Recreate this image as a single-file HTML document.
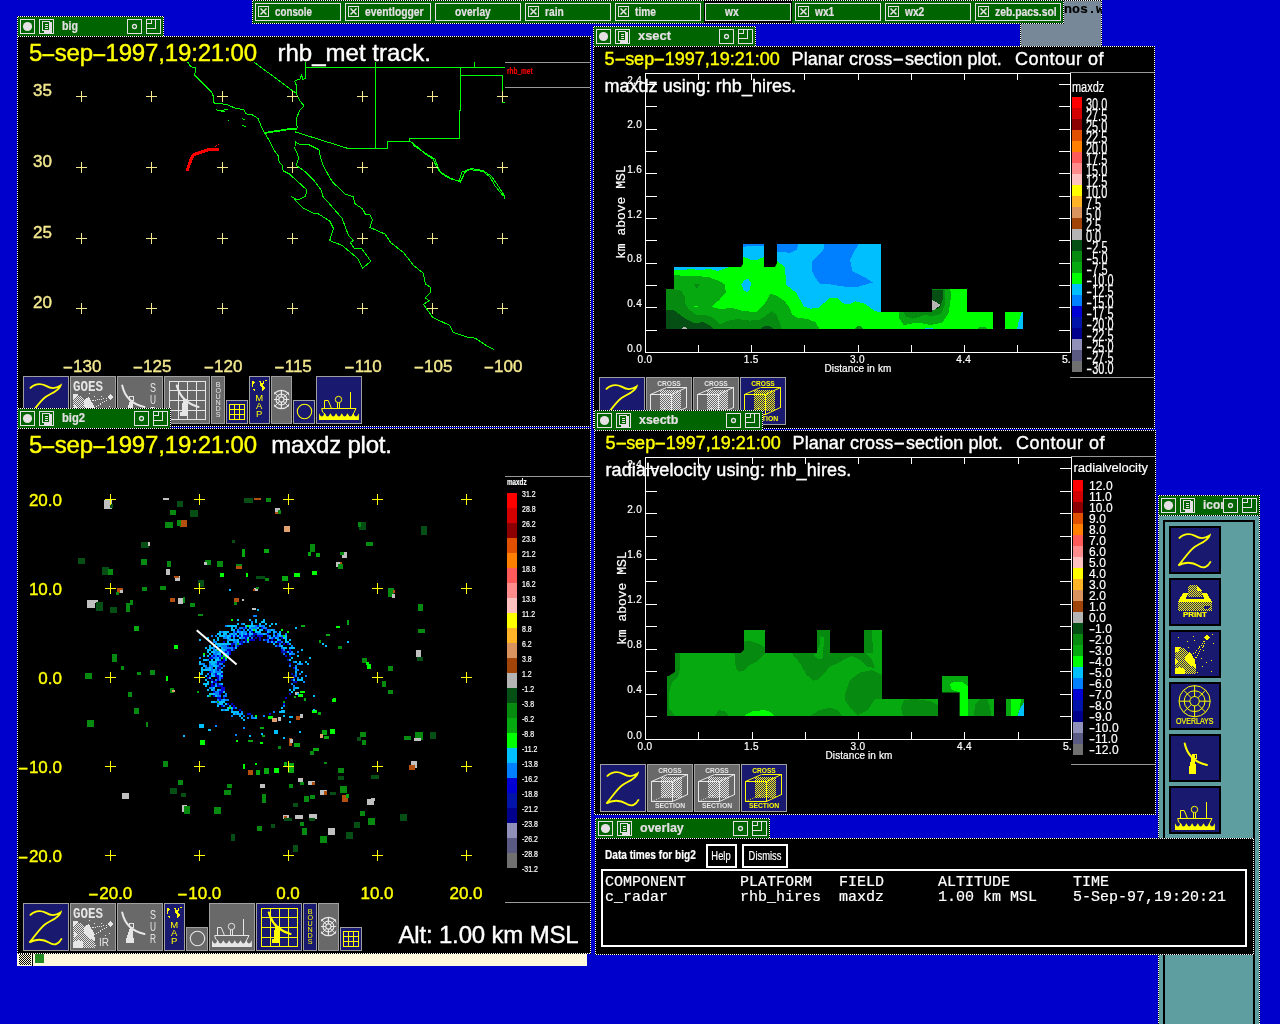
<!DOCTYPE html><html><head><meta charset="utf-8"><title>zebra display</title><style>
html,body{margin:0;padding:0;background:#0000CD;}
body{width:1280px;height:1024px;overflow:hidden;position:relative;font-family:"Liberation Sans",sans-serif;}
div{position:absolute;box-sizing:border-box;}
body>div{will-change:transform;}
svg{position:absolute;left:0;top:0;overflow:hidden;}
.dot{background:repeating-conic-gradient(#fff 0 25%,#000 0 50%) 0 0/2px 2px;}
.t{white-space:pre;line-height:1;-webkit-text-stroke:.2px;}
.b{font-weight:bold;}
.k{-webkit-text-stroke:.4px;}
.hy{display:inline-block;position:static;transform:scaleX(1.6);width:.58em;text-align:center;}
.m{font-family:"Liberation Mono",monospace;}
.s{font-family:"Liberation Serif",serif;}
.nw{display:inline-block;position:static;transform-origin:0 50%;}
</style></head><body>
<svg width="0" height="0" style="position:absolute"><defs><pattern id="ckg" width="2" height="2" patternUnits="userSpaceOnUse"><rect width="2" height="2" fill="#696969"/><rect width="1" height="1" fill="#E6E6E6"/><rect x="1" y="1" width="1" height="1" fill="#E6E6E6"/></pattern><pattern id="cky" width="2" height="2" patternUnits="userSpaceOnUse"><rect width="2" height="2" fill="#191970"/><rect width="1" height="1" fill="#FFFF00"/><rect x="1" y="1" width="1" height="1" fill="#FFFF00"/></pattern><pattern id="ckb" width="2" height="2" patternUnits="userSpaceOnUse"><rect width="2" height="2" fill="#FFF8DC"/><rect width="1" height="1" fill="#000"/><rect x="1" y="1" width="1" height="1" fill="#000"/></pattern></defs></svg>
<div class="dot" style="left:1020px;top:0px;width:82px;height:61px;overflow:hidden;">
<div style="left:1px;top:1px;width:80px;height:59px;background:#778899;"></div>
<div class="t m b" style="left:44px;top:3.31px;font-size:13.3px;color:#000;">nos.w</div>
</div>
<div class="dot" style="left:252px;top:0px;width:812px;height:24px;overflow:hidden;">
<div style="left:1px;top:1px;width:810px;height:22px;background:#006400;"></div>
<div class="t  b" style="left:23px;top:5.84px;font-size:12px;color:#E4E0E4;"><span class="nw" style="transform:scaleX(0.8154)">console</span></div>
<div class="t  b" style="left:113px;top:5.84px;font-size:12px;color:#E4E0E4;"><span class="nw" style="transform:scaleX(0.8618)">eventlogger</span></div>
<div class="t  b" style="left:203px;top:5.84px;font-size:12px;color:#E4E0E4;"><span class="nw" style="transform:scaleX(0.8500)">overlay</span></div>
<div class="t  b" style="left:293px;top:5.84px;font-size:12px;color:#E4E0E4;"><span class="nw" style="transform:scaleX(0.8500)">rain</span></div>
<div class="t  b" style="left:383px;top:5.84px;font-size:12px;color:#E4E0E4;"><span class="nw" style="transform:scaleX(0.8500)">time</span></div>
<div class="t  b" style="left:473.053px;top:5.84px;font-size:12px;color:#E4E0E4;"><span class="nw" style="transform:scaleX(0.8500)">wx</span></div>
<div class="t  b" style="left:563.053px;top:5.84px;font-size:12px;color:#E4E0E4;"><span class="nw" style="transform:scaleX(0.8500)">wx1</span></div>
<div class="t  b" style="left:653.053px;top:5.84px;font-size:12px;color:#E4E0E4;"><span class="nw" style="transform:scaleX(0.8500)">wx2</span></div>
<div class="t  b" style="left:743px;top:5.84px;font-size:12px;color:#E4E0E4;"><span class="nw" style="transform:scaleX(0.8651)">zeb.pacs.sol</span></div>
<svg width="812" height="24" viewBox="252 0 812 24" shape-rendering="crispEdges"><rect x="255.5" y="3.5" width="85" height="17" fill="none" stroke="#E4E0E4"/><rect x="258.5" y="6.5" width="10" height="10" fill="none" stroke="#E4E0E4"/><path d="M260.5 8.5 l6 6 M266.5 8.5 l-6 6" stroke="#E4E0E4" stroke-width="1.6" shape-rendering="auto"/><rect x="345.5" y="3.5" width="85" height="17" fill="none" stroke="#E4E0E4"/><rect x="348.5" y="6.5" width="10" height="10" fill="none" stroke="#E4E0E4"/><path d="M350.5 8.5 l6 6 M356.5 8.5 l-6 6" stroke="#E4E0E4" stroke-width="1.6" shape-rendering="auto"/><rect x="435.5" y="3.5" width="85" height="17" fill="none" stroke="#E4E0E4"/><rect x="525.5" y="3.5" width="85" height="17" fill="none" stroke="#E4E0E4"/><rect x="528.5" y="6.5" width="10" height="10" fill="none" stroke="#E4E0E4"/><path d="M530.5 8.5 l6 6 M536.5 8.5 l-6 6" stroke="#E4E0E4" stroke-width="1.6" shape-rendering="auto"/><rect x="615.5" y="3.5" width="85" height="17" fill="none" stroke="#E4E0E4"/><rect x="618.5" y="6.5" width="10" height="10" fill="none" stroke="#E4E0E4"/><path d="M620.5 8.5 l6 6 M626.5 8.5 l-6 6" stroke="#E4E0E4" stroke-width="1.6" shape-rendering="auto"/><rect x="704.5" y="1.5" width="87" height="21" fill="none" stroke="#000" stroke-width="1"/><rect x="705.5" y="2.5" width="85" height="19" fill="none" stroke="#000" stroke-width="1"/><rect x="705.5" y="3.5" width="85" height="17" fill="none" stroke="#E4E0E4"/><rect x="795.5" y="3.5" width="85" height="17" fill="none" stroke="#E4E0E4"/><rect x="798.5" y="6.5" width="10" height="10" fill="none" stroke="#E4E0E4"/><path d="M800.5 8.5 l6 6 M806.5 8.5 l-6 6" stroke="#E4E0E4" stroke-width="1.6" shape-rendering="auto"/><rect x="885.5" y="3.5" width="85" height="17" fill="none" stroke="#E4E0E4"/><rect x="888.5" y="6.5" width="10" height="10" fill="none" stroke="#E4E0E4"/><path d="M890.5 8.5 l6 6 M896.5 8.5 l-6 6" stroke="#E4E0E4" stroke-width="1.6" shape-rendering="auto"/><rect x="975.5" y="3.5" width="85" height="17" fill="none" stroke="#E4E0E4"/><rect x="978.5" y="6.5" width="10" height="10" fill="none" stroke="#E4E0E4"/><path d="M980.5 8.5 l6 6 M986.5 8.5 l-6 6" stroke="#E4E0E4" stroke-width="1.6" shape-rendering="auto"/></svg>
</div>
<div class="dot" style="left:17px;top:16px;width:147px;height:21px;overflow:hidden;">
<div style="left:1px;top:1px;width:145px;height:19px;background:#006400;"></div>
<div class="t  b" style="left:45px;top:3.84px;font-size:12px;color:#E4E0E4;"><span class="nw" style="transform:scaleX(0.8889)">big</span></div>
<svg width="147" height="21" viewBox="17 16 147 21" shape-rendering="crispEdges"><rect x="20.5" y="19.5" width="14" height="14" fill="#006400" stroke="#E4E0E4"/><circle cx="27.5" cy="26.5" r="4.6" fill="#E4E0E4" shape-rendering="auto"/><rect x="39.5" y="19.5" width="14" height="14" fill="#006400" stroke="#E4E0E4"/><path d="M42.5 21.5 h7 v9 h-7 z" fill="none" stroke="#E4E0E4"/><path d="M49.5 22.5 h2 v10 h-7 v-2" fill="none" stroke="#E4E0E4" stroke-width="1"/><rect x="44" y="31" width="6" height="2" fill="#E4E0E4"/><rect x="50" y="23" width="2" height="9" fill="#E4E0E4"/><rect x="45" y="24" width="3" height="1" fill="#E4E0E4"/><rect x="45" y="26" width="3" height="1" fill="#E4E0E4"/><rect x="45" y="28" width="3" height="1" fill="#E4E0E4"/><rect x="146.5" y="19.5" width="14" height="14" fill="#006400" stroke="#E4E0E4"/><path d="M151.5 19.5 v4 h-5 M155.5 19.5 v9 h-9" fill="none" stroke="#E4E0E4"/><rect x="127.5" y="19.5" width="14" height="14" fill="#006400" stroke="#E4E0E4"/><circle cx="134.5" cy="26.5" r="2" fill="none" stroke="#E4E0E4" stroke-width="1.3" shape-rendering="auto"/></svg>
</div>
<div class="dot" style="left:17px;top:36px;width:574px;height:391px;overflow:hidden;">
<div style="left:1px;top:1px;width:572px;height:389px;background:#000;"></div>
<svg width="574" height="391" viewBox="17 36 574 391" shape-rendering="crispEdges"><path d="M187.8 62.3 L190.9 66.9 L195.6 67.7 L194.8 75.5 L201.9 82.6 L211.3 91.9 L213.6 96.6 L213.6 102.9 L226.9 104.4 L233.1 107.6 L244.1 109.9 L245.6 113.8 L251.9 114.6 L258.1 118.5 L261.3 126.3 L264.4 132.6 L269.1 140.4 L273.8 149.8 L278.4 156 L279.2 162.3 L282.3 165.4 L283.1 170.8 L289.4 174 L298.8 182.6 L306.6 189.6 L305.8 195.8 L300.3 199 L295.6 199 L290.9 196.3" fill="none" stroke="#00FF00" stroke-width="1"/><path d="M294 199 L298 203 L302.5 207.8 L313.8 213.4 L317.5 213.4 L329.7 220.9 L333.4 228.4 L329.7 240.6 L341.9 245.3 L357.8 258.4 L362.5 268.4 L370.9 261.3 L361.6 248.5 L354.1 248.1 L350.3 242.5 L353.1 240.6 L348.4 235 L341.9 218.1 L330 204.4 L323 196.6 L321.4 190.4 L314.4 181 L305 171.6 L296.4 165.4 L298.8 157.6 L294.8 148.2 L295.6 141.9 L300.3 145 L308.1 144.3 L319 149.8 L320.6 157.6 L323.8 166.9 L330 177.9 L333.1 182.6 L345.6 194.3 L353.4 196.6 L354.6 203.5 L362.5 208.8 L365.3 214 L370 214.8 L372.3 220 L370 227.5 L385 234.1 L390.6 242.5 L403.8 252.8 L413.1 265 L423.4 273.4 L425.3 283.8 L430.9 287.5 L430 293.1 L425.3 297.8 L429.1 300.6 L423.4 304.4 L432.8 317.5 L449.7 325.4 L453.4 332.5 L467.5 337.2 L475 338.1 L486.3 345.6 L493.8 349.4" fill="none" stroke="#00FF00" stroke-width="1"/><path d="M264.4 132.6 L286.3 129.1 L297.2 128.2" fill="none" stroke="#00FF00" stroke-width="1"/><path d="M264.8 133.4 L286.3 129.9 L297.2 129" fill="none" stroke="#00FF00" stroke-width="1"/><path d="M294.8 131.8 L347.2 148.2 L387.6 148" fill="none" stroke="#00FF00" stroke-width="1"/><path d="M297.2 128.2 L296.4 118.5 L299.5 110.7 L304.2 106 L300.3 101.3 L296.4 93.5 L296.4 85.7 L294.8 81 L300 79 L301.5 75 L303 79.5 L305.5 78 L305.8 66.9 L305.8 62" fill="none" stroke="#00FF00" stroke-width="1"/><path d="M254.2 62.3 L296.4 93.5" fill="none" stroke="#00FF00" stroke-width="1"/><path d="M305.8 67.5 L504.5 67.5" fill="none" stroke="#00FF00" stroke-width="1"/><path d="M375.5 61.5 L375.5 148" fill="none" stroke="#00FF00" stroke-width="1"/><path d="M474.5 61.5 L474.5 67.5" fill="none" stroke="#00FF00" stroke-width="1"/><path d="M460.5 67.5 L460.5 110.5 L459.5 110.5 L459.5 138.5 L409.5 138.5 L409.5 141.5 L387.5 141.5 L387.5 148" fill="none" stroke="#00FF00" stroke-width="1"/><path d="M460.5 75.5 L502.5 75.5 L502.5 102 L505 102" fill="none" stroke="#00FF00" stroke-width="1"/><path d="M410.6 141.3 L414.4 146 L425.6 153.5 L435 159.1 L437.8 166.6 L440.6 172.3 L450 177.9 L460.3 182 L465 172.3 L470.6 168.5 L482.8 170.4 L491.3 176 L497.8 185.4 L504.4 195.7 L504.8 198.5" fill="none" stroke="#00FF00" stroke-width="1"/><path d="M411.6 142 L426 154.5 L433.5 159.5 L436.5 167.5 L441.5 173.5 L450 178.8 L459 181 L462 172 L469 169.5 L483 171.4 L490 177 L495.5 186.5 L503.4 196" fill="none" stroke="#00FF00" stroke-width="1"/><path d="M216 109.5 L220 111 L224 110 L228 109" fill="none" stroke="#00FF00" stroke-width="1"/><path d="M221 111.5 L225 111" fill="none" stroke="#00FF00" stroke-width="1"/><path d="M228.4 120.3 L229.4 121.3" fill="none" stroke="#00FF00" stroke-width="1"/><path d="M242 118.5 L245 120" fill="none" stroke="#00FF00" stroke-width="1"/><path d="M241.7 124.8 L245.6 127.1" fill="none" stroke="#00FF00" stroke-width="1"/><path d="M232 106.5 L236 108.5" fill="none" stroke="#00FF00" stroke-width="1"/><path d="M187 170.8 L191.7 157.6 L194.1 154.4 L208.1 149.8 L219 149.5" fill="none" stroke="#FF0000" stroke-width="3" stroke-linejoin="round"/><path d="M215 147 l2 -2 l2 -1 M216 149 h3" stroke="#FF0000" stroke-width="1" stroke-dasharray="1 1" fill="none"/><rect x="76" y="96" width="11" height="1" fill="#F3E88E"/><rect x="81" y="91" width="1" height="11" fill="#F3E88E"/><rect x="76" y="167" width="11" height="1" fill="#F3E88E"/><rect x="81" y="162" width="1" height="11" fill="#F3E88E"/><rect x="76" y="238" width="11" height="1" fill="#F3E88E"/><rect x="81" y="233" width="1" height="11" fill="#F3E88E"/><rect x="76" y="308" width="11" height="1" fill="#F3E88E"/><rect x="81" y="303" width="1" height="11" fill="#F3E88E"/><rect x="146" y="96" width="11" height="1" fill="#F3E88E"/><rect x="151" y="91" width="1" height="11" fill="#F3E88E"/><rect x="146" y="167" width="11" height="1" fill="#F3E88E"/><rect x="151" y="162" width="1" height="11" fill="#F3E88E"/><rect x="146" y="238" width="11" height="1" fill="#F3E88E"/><rect x="151" y="233" width="1" height="11" fill="#F3E88E"/><rect x="146" y="308" width="11" height="1" fill="#F3E88E"/><rect x="151" y="303" width="1" height="11" fill="#F3E88E"/><rect x="217" y="96" width="11" height="1" fill="#F3E88E"/><rect x="222" y="91" width="1" height="11" fill="#F3E88E"/><rect x="217" y="167" width="11" height="1" fill="#F3E88E"/><rect x="222" y="162" width="1" height="11" fill="#F3E88E"/><rect x="217" y="238" width="11" height="1" fill="#F3E88E"/><rect x="222" y="233" width="1" height="11" fill="#F3E88E"/><rect x="217" y="308" width="11" height="1" fill="#F3E88E"/><rect x="222" y="303" width="1" height="11" fill="#F3E88E"/><rect x="287" y="96" width="11" height="1" fill="#F3E88E"/><rect x="292" y="91" width="1" height="11" fill="#F3E88E"/><rect x="287" y="167" width="11" height="1" fill="#F3E88E"/><rect x="292" y="162" width="1" height="11" fill="#F3E88E"/><rect x="287" y="238" width="11" height="1" fill="#F3E88E"/><rect x="292" y="233" width="1" height="11" fill="#F3E88E"/><rect x="287" y="308" width="11" height="1" fill="#F3E88E"/><rect x="292" y="303" width="1" height="11" fill="#F3E88E"/><rect x="357" y="96" width="11" height="1" fill="#F3E88E"/><rect x="362" y="91" width="1" height="11" fill="#F3E88E"/><rect x="357" y="167" width="11" height="1" fill="#F3E88E"/><rect x="362" y="162" width="1" height="11" fill="#F3E88E"/><rect x="357" y="238" width="11" height="1" fill="#F3E88E"/><rect x="362" y="233" width="1" height="11" fill="#F3E88E"/><rect x="357" y="308" width="11" height="1" fill="#F3E88E"/><rect x="362" y="303" width="1" height="11" fill="#F3E88E"/><rect x="427" y="96" width="11" height="1" fill="#F3E88E"/><rect x="432" y="91" width="1" height="11" fill="#F3E88E"/><rect x="427" y="167" width="11" height="1" fill="#F3E88E"/><rect x="432" y="162" width="1" height="11" fill="#F3E88E"/><rect x="427" y="238" width="11" height="1" fill="#F3E88E"/><rect x="432" y="233" width="1" height="11" fill="#F3E88E"/><rect x="427" y="308" width="11" height="1" fill="#F3E88E"/><rect x="432" y="303" width="1" height="11" fill="#F3E88E"/><rect x="497" y="96" width="11" height="1" fill="#F3E88E"/><rect x="502" y="91" width="1" height="11" fill="#F3E88E"/><rect x="497" y="167" width="11" height="1" fill="#F3E88E"/><rect x="502" y="162" width="1" height="11" fill="#F3E88E"/><rect x="497" y="238" width="11" height="1" fill="#F3E88E"/><rect x="502" y="233" width="1" height="11" fill="#F3E88E"/><rect x="497" y="308" width="11" height="1" fill="#F3E88E"/><rect x="502" y="303" width="1" height="11" fill="#F3E88E"/><rect x="505" y="62" width="85" height="1" fill="#999"/><rect x="505" y="87" width="85" height="1" fill="#999"/><g transform="translate(23 376)"><rect x="0" y="0" width="46" height="48" fill="#A0A0A0"/><rect x="1" y="1" width="44" height="46" fill="#191970"/><path shape-rendering="auto" d="M6.9 12.6 C10 8.2 17 6.6 22.5 9.6 S32 13.2 37.6 9.4 C36 15 27.5 17.5 22.5 21 C17 25 12 33 6.4 39.6 C12 36 20 35.6 26 39.6 S36 40.6 38.8 35.4" fill="none" stroke="#FFFF00" stroke-width="1.8" stroke-linejoin="miter"/></g><g transform="translate(70 376)"><rect x="0" y="0" width="46" height="48" fill="#A0A0A0"/><rect x="1" y="1" width="44" height="46" fill="#696969"/><text x="3" y="15" font-size="15" font-weight="bold" textLength="30" lengthAdjust="spacingAndGlyphs" fill="#E6E6E6" font-family="Liberation Mono, monospace">GOES</text><path d="M3 45 V18 A24 27 0 0 1 25 45 Z" fill="url(#ckg)"/><path d="M3 18 h5 l-3 5 h-2z M14 24 l5 -3 l5 9 l1 8 l-6 -3 l-5 -6z M3 40 l5 -3 l5 2 v6 h-10z M4 29 l3 3 l-3 2z" fill="#E6E6E6"/><path d="M40.5 18 l3 3 l-3 3 l-3 -3z" fill="#E6E6E6"/><path d="M22.5 24.5 L37 22.5 M24.5 31.5 L38.5 23.5" stroke="#E6E6E6" stroke-width="1" stroke-dasharray="1 1.2"/><rect x="19" y="17" width="1" height="1" fill="#E6E6E6"/><rect x="24" y="20" width="1" height="1" fill="#E6E6E6"/><rect x="31" y="20" width="1" height="1" fill="#E6E6E6"/><rect x="35" y="32" width="1" height="1" fill="#E6E6E6"/><rect x="39" y="30" width="1" height="1" fill="#E6E6E6"/><rect x="25" y="42" width="1" height="1" fill="#E6E6E6"/><text x="29" y="43" font-size="11" fill="#E6E6E6" textLength="10" lengthAdjust="spacingAndGlyphs">IR</text></g><g transform="translate(117 376)"><rect x="0" y="0" width="46" height="48" fill="#A0A0A0"/><rect x="1" y="1" width="44" height="46" fill="#696969"/><path shape-rendering="auto" d="M5.2 9.5 Q9 27 27.5 31" fill="none" stroke="#E6E6E6" stroke-width="2" stroke-linecap="round"/><path d="M13 25 h3 l.5 10 h-7z M9 35 h7.5 v5 h-7.5z" fill="#E6E6E6"/><rect x="12.5" y="20.5" width="4" height="4" fill="none" stroke="#E6E6E6"/><text x="36" y="16" font-size="12.5" text-anchor="middle" fill="#E6E6E6" textLength="6" lengthAdjust="spacingAndGlyphs">S</text><text x="36" y="28" font-size="12.5" text-anchor="middle" fill="#E6E6E6" textLength="6" lengthAdjust="spacingAndGlyphs">U</text><text x="36" y="40" font-size="12.5" text-anchor="middle" fill="#E6E6E6" textLength="6" lengthAdjust="spacingAndGlyphs">R</text></g><g transform="translate(164 376)"><rect x="0" y="0" width="46" height="48" fill="#A0A0A0"/><rect x="1" y="1" width="44" height="46" fill="#696969"/><rect x="5" y="5" width="1" height="39" fill="#E6E6E6"/><rect x="5" y="5" width="37" height="1" fill="#E6E6E6"/><rect x="14" y="5" width="1" height="39" fill="#E6E6E6"/><rect x="5" y="14" width="37" height="1" fill="#E6E6E6"/><rect x="23" y="5" width="1" height="39" fill="#E6E6E6"/><rect x="5" y="24" width="37" height="1" fill="#E6E6E6"/><rect x="32" y="5" width="1" height="39" fill="#E6E6E6"/><rect x="5" y="34" width="37" height="1" fill="#E6E6E6"/><rect x="41" y="5" width="1" height="39" fill="#E6E6E6"/><rect x="5" y="43" width="37" height="1" fill="#E6E6E6"/><path shape-rendering="auto" d="M12.8 9.5 Q17 26 34.5 31" fill="none" stroke="#E6E6E6" stroke-width="2.2" stroke-linecap="round"/><path d="M19 23 h3.5 l.5 17 h-7 v-4 h1.5z" fill="#E6E6E6"/></g><g transform="translate(211 376)"><rect x="0" y="0" width="14" height="48" fill="#A0A0A0"/><rect x="1" y="1" width="12" height="46" fill="#696969"/><text x="7.2" y="11.2" font-size="7.2" text-anchor="middle" fill="#E6E6E6">B</text><text x="7.2" y="17.2" font-size="7.2" text-anchor="middle" fill="#E6E6E6">O</text><text x="7.2" y="23.2" font-size="7.2" text-anchor="middle" fill="#E6E6E6">U</text><text x="7.2" y="29.2" font-size="7.2" text-anchor="middle" fill="#E6E6E6">N</text><text x="7.2" y="35.2" font-size="7.2" text-anchor="middle" fill="#E6E6E6">D</text><text x="7.2" y="41.2" font-size="7.2" text-anchor="middle" fill="#E6E6E6">S</text></g><g transform="translate(226 400)"><rect x="0" y="0" width="22" height="24" fill="#A0A0A0"/><rect x="1" y="1" width="20" height="22" fill="#191970"/><rect x="3" y="4" width="1" height="16" fill="#FFFF00"/><rect x="3" y="4" width="16" height="1" fill="#FFFF00"/><rect x="8" y="4" width="1" height="16" fill="#FFFF00"/><rect x="3" y="9" width="16" height="1" fill="#FFFF00"/><rect x="13" y="4" width="1" height="16" fill="#FFFF00"/><rect x="3" y="14" width="16" height="1" fill="#FFFF00"/><rect x="18" y="4" width="1" height="16" fill="#FFFF00"/><rect x="3" y="19" width="16" height="1" fill="#FFFF00"/></g><g transform="translate(249 376)"><rect x="0" y="0" width="21" height="48" fill="#A0A0A0"/><rect x="1" y="1" width="19" height="46" fill="#191970"/><path d="M3 5 l3.5 1 l-2 2.5 l-.5 3.5 l-1 -1z M3.5 13.5 l2.5 -1 v2.5z M9 5 l2.5 .5 l1.5 2 l1.5 -2.5 l1 0 l-1 3 l-1.5 1 l1.5 1.5 l1.5 .5 l-.5 2 l-2 2 l-.5 -3.5 l-2 -2 l-.5 -3z M16 4.5 l2.5 -1 l-1.5 2.5z" fill="#FFFF00"/><text x="10.2" y="24.8" font-size="9.5" text-anchor="middle" fill="#FFFF00">M</text><text x="10.2" y="32.8" font-size="9.5" text-anchor="middle" fill="#FFFF00">A</text><text x="10.2" y="41" font-size="9.5" text-anchor="middle" fill="#FFFF00">P</text></g><g transform="translate(271 376)"><rect x="0" y="0" width="21" height="48" fill="#A0A0A0"/><rect x="1" y="1" width="19" height="46" fill="#696969"/><clipPath id="pc1"><rect x="3" y="10" width="15.2" height="28"/></clipPath><g shape-rendering="auto" clip-path="url(#pc1)" fill="none" stroke="#E6E6E6" stroke-width="1.2"><circle cx="10.4" cy="23.5" r="9.2"/><circle cx="10.4" cy="23.5" r="5.4"/><path d="M10.4 20.9 v-7 M10.4 26.1 v7 M7.8 23.5 h-6 M13 23.5 h6"/><path d="M8.4 21.5 l-5 -5 M12.4 21.5 l5 -5 M8.4 25.5 l-5 5 M12.4 25.5 l5 5" stroke-width="1"/><circle cx="10.4" cy="23.5" r="2.6"/></g></g><g transform="translate(293 400)"><rect x="0" y="0" width="22" height="24" fill="#A0A0A0"/><rect x="1" y="1" width="20" height="22" fill="#191970"/><circle shape-rendering="auto" cx="11.5" cy="11.5" r="7.2" fill="none" stroke="#FFFF00" stroke-width="1.1"/></g><g transform="translate(316 376)"><rect x="0" y="0" width="46" height="48" fill="#A0A0A0"/><rect x="1" y="1" width="44" height="46" fill="#191970"/><path shape-rendering="auto" d="M5.7 32.5 H40 L37 38.5 M5.7 32.5 Q5.5 36.5 9.5 38.5 M8.5 32.5 V24.5 H12.2 L15.5 32.5 M21.5 32.5 V27 M23.5 32.5 V27 M34.5 32.5 V16" fill="none" stroke="#FFFF00" stroke-width="1"/><circle shape-rendering="auto" cx="22.5" cy="23.5" r="3.2" fill="none" stroke="#FFFF00"/><path shape-rendering="auto" d="M3 44 V37.3 q2.85 6.4 5.7 0 q2.85 6.4 5.7 0 q2.85 6.4 5.7 0 q2.85 6.4 5.7 0 q2.85 6.4 5.7 0 q2.85 6.4 5.7 0 q2.85 6.4 5.7 0 V44z" fill="#FFFF00"/></g></svg>
<div class="t  k" style="left:12.1px;top:4.68px;font-size:24px;color:#FFFF00;letter-spacing:-0.156px;">5<span class="hy" style="width:0.52em;transform:scaleX(1.9)">-</span>sep<span class="hy" style="width:0.52em;transform:scaleX(1.9)">-</span>1997,19:21:00</div>
<div class="t  k" style="left:260.5px;top:4.68px;font-size:24px;color:#fff;letter-spacing:0.010px;">rhb_met track.</div>
<div class="t  k" style="left:16px;top:45.61px;font-size:17px;color:#F3E88E;">35</div>
<div class="t  k" style="left:16px;top:116.61px;font-size:17px;color:#F3E88E;">30</div>
<div class="t  k" style="left:16px;top:187.61px;font-size:17px;color:#F3E88E;">25</div>
<div class="t  k" style="left:16px;top:257.61px;font-size:17px;color:#F3E88E;">20</div>
<div class="t  k" style="left:64.5px;transform:translateX(-50%);top:322.21px;font-size:17px;color:#F3E88E;"><span class="hy" style="width:0.68em;transform:scaleX(1.9)">-</span>130</div>
<div class="t  k" style="left:134.5px;transform:translateX(-50%);top:322.21px;font-size:17px;color:#F3E88E;"><span class="hy" style="width:0.68em;transform:scaleX(1.9)">-</span>125</div>
<div class="t  k" style="left:205.5px;transform:translateX(-50%);top:322.21px;font-size:17px;color:#F3E88E;"><span class="hy" style="width:0.68em;transform:scaleX(1.9)">-</span>120</div>
<div class="t  k" style="left:275.5px;transform:translateX(-50%);top:322.21px;font-size:17px;color:#F3E88E;"><span class="hy" style="width:0.68em;transform:scaleX(1.9)">-</span>115</div>
<div class="t  k" style="left:345.5px;transform:translateX(-50%);top:322.21px;font-size:17px;color:#F3E88E;"><span class="hy" style="width:0.68em;transform:scaleX(1.9)">-</span>110</div>
<div class="t  k" style="left:415.5px;transform:translateX(-50%);top:322.21px;font-size:17px;color:#F3E88E;"><span class="hy" style="width:0.68em;transform:scaleX(1.9)">-</span>105</div>
<div class="t  k" style="left:485.5px;transform:translateX(-50%);top:322.21px;font-size:17px;color:#F3E88E;"><span class="hy" style="width:0.68em;transform:scaleX(1.9)">-</span>100</div>
<div class="t b" style="left:490px;top:31.38px;font-size:9px;color:#FF0000;"><span class="nw" style="transform:scaleX(.72)">rhb_met</span></div>
</div>
<div class="dot" style="left:593px;top:26px;width:163px;height:21px;overflow:hidden;">
<div style="left:1px;top:1px;width:161px;height:19px;background:#006400;"></div>
<div class="t  b" style="left:45px;top:3.84px;font-size:12px;color:#E4E0E4;"><span class="nw" style="transform:scaleX(1.0754)">xsect</span></div>
<svg width="163" height="21" viewBox="593 26 163 21" shape-rendering="crispEdges"><rect x="596.5" y="29.5" width="14" height="14" fill="#006400" stroke="#E4E0E4"/><circle cx="603.5" cy="36.5" r="4.6" fill="#E4E0E4" shape-rendering="auto"/><rect x="615.5" y="29.5" width="14" height="14" fill="#006400" stroke="#E4E0E4"/><path d="M618.5 31.5 h7 v9 h-7 z" fill="none" stroke="#E4E0E4"/><path d="M625.5 32.5 h2 v10 h-7 v-2" fill="none" stroke="#E4E0E4" stroke-width="1"/><rect x="620" y="41" width="6" height="2" fill="#E4E0E4"/><rect x="626" y="33" width="2" height="9" fill="#E4E0E4"/><rect x="621" y="34" width="3" height="1" fill="#E4E0E4"/><rect x="621" y="36" width="3" height="1" fill="#E4E0E4"/><rect x="621" y="38" width="3" height="1" fill="#E4E0E4"/><rect x="738.5" y="29.5" width="14" height="14" fill="#006400" stroke="#E4E0E4"/><path d="M743.5 29.5 v4 h-5 M747.5 29.5 v9 h-9" fill="none" stroke="#E4E0E4"/><rect x="719.5" y="29.5" width="14" height="14" fill="#006400" stroke="#E4E0E4"/><circle cx="726.5" cy="36.5" r="2" fill="none" stroke="#E4E0E4" stroke-width="1.3" shape-rendering="auto"/></svg>
</div>
<div class="dot" style="left:593px;top:46px;width:562px;height:383px;overflow:hidden;">
<div style="left:1px;top:1px;width:560px;height:381px;background:#000;"></div>
<svg width="562" height="383" viewBox="593 46 562 383" shape-rendering="crispEdges"><clipPath id="clipxsect"><path d="M666 329 L666 289 L674 289 L674 267 L741 267 L743 264 L743 244 L764 244 L764 267 L775 267 L777 263 L777 244 L881 244 L881 312 L932 312 L932 289 L967 289 L967 312 L993 312 L993 329Z"/><path d="M1005 312 L1023 312 L1023 329 L1005 329Z"/></clipPath><g clip-path="url(#clipxsect)"><rect x="640" y="223" width="400" height="120" fill="#00FF00"/><path d="M776.9 244 L776.9 260.5 L785.2 267.5 L785.9 284.7 L796.1 292.5 L803.9 306.6 L810 308.6 L818 308.1 L829.7 298.3 L837.5 298.3 L844.5 304.2 L850 304 L855 301.3 L865 303.8 L875 311.3 L881 312 L882 244Z" fill="#00BFFF"/><path d="M743 244 L764 244 L764 257 L758 259.5 L750 259.5 L743 256.5Z" fill="#00BFFF"/><path d="M743 244 L764 244 L764 246.5 L758 245.8 L750 245.8 L743 247Z" fill="#007FFF"/><path d="M674 267 L729 267 L718 271 L710 269 L700 270 L690 269 L680 270.5 L674 269.5Z" fill="#00BFFF"/><path d="M741.4 284.7 L743.8 280 L748.4 278.8 L751.1 283.1 L750 289.4 L747.7 292.5 L743.8 290.2Z" fill="#00BFFF"/><path d="M776.9 244 L798.4 244 L796.9 249.5 L790.6 252.7 L776.9 251.9Z" fill="#007FFF"/><path d="M824.2 244 L823.4 250.3 L812.5 261.2 L811.7 270.6 L815.6 278.4 L820.3 283.9 L834.4 284.7 L840 286.2 L855 287.5 L872.5 282.5 L865 277.5 L852.5 271.2 L850 260 L855 250 L858.8 244Z" fill="#007FFF"/><path d="M673.9 275.3 L696.9 276.1 L707.8 276.9 L718.8 280.8 L725 284.7 L725.8 292.5 L718.8 300.3 L711.7 306.6 L718.8 308.9 L732.8 308.1 L743.8 311.2 L756.2 312 L764.8 303.4 L770.3 294.1 L775 294.8 L784.4 301.1 L789.1 306.6 L792.2 314.4 L796.9 317.5 L807.8 319.1 L815.6 322.2 L819.5 329 L666 329 L666 289 L673.9 289Z" fill="#06AA10"/><path d="M666 289 L673.4 289 L681.2 290.9 L685.2 297.2 L685.2 303.4 L689.1 309.7 L696.9 315.2 L706.2 315.2 L712.5 317.5 L717.2 322.2 L719.5 324.5 L728.1 320.6 L737.5 319.1 L750 320.6 L759.4 319.8 L765.6 315.9 L771.9 311.2 L776.6 315.2 L779.7 322.2 L782 329 L666 329Z" fill="#078A10"/><path d="M693.8 284.4 L700 284.4 L696.9 288.6Z" fill="#078A10"/><path d="M693.8 306 L697.7 306 L697.7 307 L693.8 307Z" fill="#00FF00"/><path d="M666 310 L673.4 310 L679.7 314.4 L685.9 319.1 L693.8 323 L703.1 322.2 L709.4 325.3 L713.3 329 L666 329Z" fill="#064F14"/><path d="M760.2 329 L764 326.5 L770 326.3 L773.4 329Z" fill="#064F14"/><path d="M681.2 329 L683 327.3 L686 327.3 L687.5 329Z" fill="#B4B4B4"/><path d="M898.8 311.8 L898.8 317.5 L903.8 325 L917.5 322.5 L930 325 L942.5 322.5 L948.8 312.5 L951.2 295 L950 288.8 L932 288.8 L932 300 L932.5 311.8Z" fill="#06AA10"/><path d="M903.8 311.8 L905 316.2 L912.5 318.8 L925 315 L932.5 316.2 L941.2 313.8 L945 305 L945.5 292.5 L943.8 288.8 L932 288.8 L932 311.8Z" fill="#078A10"/><path d="M932 290 L942.5 290 L942.5 300 L940 307.5 L933.8 310 L932 310Z" fill="#064F14"/><path d="M932 300 L941.2 305 L933.8 310 L932 310Z" fill="#B4B4B4"/><path d="M924 329 L925 328 L932 328 L933 329Z" fill="#00BFFF"/><path d="M855 329 L857 326 L861 326 L863 329Z" fill="#078A10"/><path d="M977 329 L980 326.5 L984 326.5 L988 329Z" fill="#06AA10"/><path d="M1023 312 L1023 329 L1017 329 L1019 320 L1022 312Z" fill="#00BFFF"/></g><rect x="645" y="73" width="426" height="1" fill="#fff"/><rect x="645" y="352" width="426" height="1" fill="#fff"/><rect x="645" y="73" width="1" height="280" fill="#fff"/><rect x="1070" y="73" width="1" height="280" fill="#fff"/><rect x="645" y="330" width="12" height="1" fill="#fff"/><rect x="1059" y="330" width="12" height="1" fill="#fff"/><rect x="645" y="307" width="12" height="1" fill="#fff"/><rect x="1059" y="307" width="12" height="1" fill="#fff"/><rect x="645" y="285" width="12" height="1" fill="#fff"/><rect x="1059" y="285" width="12" height="1" fill="#fff"/><rect x="645" y="263" width="12" height="1" fill="#fff"/><rect x="1059" y="263" width="12" height="1" fill="#fff"/><rect x="645" y="240" width="12" height="1" fill="#fff"/><rect x="1059" y="240" width="12" height="1" fill="#fff"/><rect x="645" y="218" width="12" height="1" fill="#fff"/><rect x="1059" y="218" width="12" height="1" fill="#fff"/><rect x="645" y="196" width="12" height="1" fill="#fff"/><rect x="1059" y="196" width="12" height="1" fill="#fff"/><rect x="645" y="173" width="12" height="1" fill="#fff"/><rect x="1059" y="173" width="12" height="1" fill="#fff"/><rect x="645" y="151" width="12" height="1" fill="#fff"/><rect x="1059" y="151" width="12" height="1" fill="#fff"/><rect x="645" y="129" width="12" height="1" fill="#fff"/><rect x="1059" y="129" width="12" height="1" fill="#fff"/><rect x="645" y="106" width="12" height="1" fill="#fff"/><rect x="1059" y="106" width="12" height="1" fill="#fff"/><rect x="645" y="84" width="12" height="1" fill="#fff"/><rect x="1059" y="84" width="12" height="1" fill="#fff"/><rect x="698" y="345" width="1" height="7" fill="#fff"/><rect x="698" y="73" width="1" height="7" fill="#fff"/><rect x="751" y="345" width="1" height="7" fill="#fff"/><rect x="751" y="73" width="1" height="7" fill="#fff"/><rect x="804" y="345" width="1" height="7" fill="#fff"/><rect x="804" y="73" width="1" height="7" fill="#fff"/><rect x="858" y="345" width="1" height="7" fill="#fff"/><rect x="858" y="73" width="1" height="7" fill="#fff"/><rect x="911" y="345" width="1" height="7" fill="#fff"/><rect x="911" y="73" width="1" height="7" fill="#fff"/><rect x="964" y="345" width="1" height="7" fill="#fff"/><rect x="964" y="73" width="1" height="7" fill="#fff"/><rect x="1017" y="345" width="1" height="7" fill="#fff"/><rect x="1017" y="73" width="1" height="7" fill="#fff"/><rect x="1071" y="73" width="83" height="304" fill="#000"/><rect x="1072" y="97" width="10" height="11" fill="#FF0000"/><rect x="1072" y="108" width="10" height="11" fill="#D20000"/><rect x="1072" y="119" width="10" height="11" fill="#8B0000"/><rect x="1072" y="130" width="10" height="11" fill="#E05000"/><rect x="1072" y="141" width="10" height="11" fill="#FF7F00"/><rect x="1072" y="152" width="10" height="11" fill="#FF5A5A"/><rect x="1072" y="163" width="10" height="11" fill="#FF8C8C"/><rect x="1072" y="174" width="10" height="11" fill="#FFC0C0"/><rect x="1072" y="185" width="10" height="11" fill="#FFFF00"/><rect x="1072" y="196" width="10" height="11" fill="#FFB428"/><rect x="1072" y="207" width="10" height="11" fill="#D9935E"/><rect x="1072" y="218" width="10" height="11" fill="#A0440A"/><rect x="1072" y="229" width="10" height="11" fill="#B4B4B4"/><rect x="1072" y="240" width="10" height="11" fill="#064F14"/><rect x="1072" y="251" width="10" height="11" fill="#078A10"/><rect x="1072" y="262" width="10" height="11" fill="#06AA10"/><rect x="1072" y="273" width="10" height="11" fill="#00FF00"/><rect x="1072" y="284" width="10" height="11" fill="#00BFFF"/><rect x="1072" y="295" width="10" height="11" fill="#007FFF"/><rect x="1072" y="306" width="10" height="11" fill="#0000D2"/><rect x="1072" y="317" width="10" height="11" fill="#0014AA"/><rect x="1072" y="328" width="10" height="11" fill="#00008C"/><rect x="1072" y="339" width="10" height="11" fill="#9090B8"/><rect x="1072" y="350" width="10" height="11" fill="#5A5A82"/><rect x="1072" y="361" width="10" height="11" fill="#707070"/><rect x="1070" y="72" width="84" height="1" fill="#999"/><rect x="1070" y="377" width="84" height="1" fill="#999"/><g transform="translate(599 377)"><rect x="0" y="0" width="46" height="48" fill="#A0A0A0"/><rect x="1" y="1" width="44" height="46" fill="#191970"/><path shape-rendering="auto" d="M6.9 12.6 C10 8.2 17 6.6 22.5 9.6 S32 13.2 37.6 9.4 C36 15 27.5 17.5 22.5 21 C17 25 12 33 6.4 39.6 C12 36 20 35.6 26 39.6 S36 40.6 38.8 35.4" fill="none" stroke="#FFFF00" stroke-width="1.8" stroke-linejoin="miter"/></g><g transform="translate(646 377)"><rect x="0" y="0" width="46" height="48" fill="#A0A0A0"/><rect x="1" y="1" width="44" height="46" fill="#696969"/><text x="23" y="8.8" font-size="6.6" font-weight="bold" text-anchor="middle" fill="#E6E6E6">CROSS</text><text x="23" y="44.3" font-size="6.8" font-weight="bold" text-anchor="middle" fill="#E6E6E6">SECTION</text><rect x="13.5" y="12.5" width="21" height="21" fill="url(#ckg)"/><g fill="none" stroke="#E6E6E6" stroke-width="1"><rect x="4.5" y="17.5" width="21" height="20"/><path d="M20.5 10.5 H40.5 V30.5"/><path shape-rendering="auto" d="M4.5 17.5 L20.5 10.5 M25.5 17.5 L40.5 10.5 M25.5 37.5 L40.5 30.5"/><path shape-rendering="auto" d="M4.5 37.5 L20.5 30.5" stroke-dasharray="1 1.5"/></g></g><g transform="translate(693 377)"><rect x="0" y="0" width="46" height="48" fill="#A0A0A0"/><rect x="1" y="1" width="44" height="46" fill="#696969"/><text x="23" y="8.8" font-size="6.6" font-weight="bold" text-anchor="middle" fill="#E6E6E6">CROSS</text><text x="23" y="44.3" font-size="6.8" font-weight="bold" text-anchor="middle" fill="#E6E6E6">SECTION</text><rect x="13.5" y="12.5" width="21" height="21" fill="url(#ckg)"/><g fill="none" stroke="#E6E6E6" stroke-width="1"><rect x="4.5" y="17.5" width="21" height="20"/><path d="M20.5 10.5 H40.5 V30.5"/><path shape-rendering="auto" d="M4.5 17.5 L20.5 10.5 M25.5 17.5 L40.5 10.5 M25.5 37.5 L40.5 30.5"/><path shape-rendering="auto" d="M4.5 37.5 L20.5 30.5" stroke-dasharray="1 1.5"/></g></g><g transform="translate(740 377)"><rect x="0" y="0" width="46" height="48" fill="#A0A0A0"/><rect x="1" y="1" width="44" height="46" fill="#191970"/><text x="23" y="8.8" font-size="6.6" font-weight="bold" text-anchor="middle" fill="#FFFF00">CROSS</text><text x="23" y="44.3" font-size="6.8" font-weight="bold" text-anchor="middle" fill="#FFFF00">SECTION</text><rect x="13.5" y="12.5" width="21" height="21" fill="url(#cky)"/><g fill="none" stroke="#FFFF00" stroke-width="1"><rect x="4.5" y="17.5" width="21" height="20"/><path d="M20.5 10.5 H40.5 V30.5"/><path shape-rendering="auto" d="M4.5 17.5 L20.5 10.5 M25.5 17.5 L40.5 10.5 M25.5 37.5 L40.5 30.5"/><path shape-rendering="auto" d="M4.5 37.5 L20.5 30.5" stroke-dasharray="1 1.5"/></g></g></svg>
<div class="t  k" style="left:11.5px;top:3.76px;font-size:18px;color:#FFFF00;letter-spacing:-0.005px;">5<span class="hy" style="width:0.59em;transform:scaleX(2)">-</span>sep<span class="hy" style="width:0.59em;transform:scaleX(2)">-</span>1997,19:21:00</div>
<div class="t  k" style="left:198.6px;top:3.76px;font-size:18px;color:#fff;letter-spacing:0.056px;">Planar cross<span class="hy" style="width:0.7em;transform:scaleX(2)">-</span>section plot.</div>
<div class="t  k" style="left:422px;top:3.76px;font-size:18px;color:#fff;letter-spacing:0.486px;">Contour of</div>
<div class="t  k" style="left:11.5px;top:30.76px;font-size:18px;color:#fff;letter-spacing:0.020px;">maxdz using: rhb_hires.</div>
<div class="t " style="right:513px;top:297.54px;font-size:10px;color:#fff;letter-spacing:.3px;">0.0</div>
<div class="t " style="right:513px;top:252.90px;font-size:10px;color:#fff;letter-spacing:.3px;">0.4</div>
<div class="t " style="right:513px;top:208.26px;font-size:10px;color:#fff;letter-spacing:.3px;">0.8</div>
<div class="t " style="right:513px;top:163.61px;font-size:10px;color:#fff;letter-spacing:.3px;">1.2</div>
<div class="t " style="right:513px;top:118.97px;font-size:10px;color:#fff;letter-spacing:.3px;">1.6</div>
<div class="t " style="right:513px;top:74.34px;font-size:10px;color:#fff;letter-spacing:.3px;">2.0</div>
<div class="t " style="right:513px;top:29.69px;font-size:10px;color:#fff;letter-spacing:.3px;">2.4</div>
<div class="t " style="left:52px;transform:translateX(-50%);top:308.54px;font-size:10px;color:#fff;letter-spacing:.3px;">0.0</div>
<div class="t " style="left:158.25px;transform:translateX(-50%);top:308.54px;font-size:10px;color:#fff;letter-spacing:.3px;">1.5</div>
<div class="t " style="left:264.5px;transform:translateX(-50%);top:308.54px;font-size:10px;color:#fff;letter-spacing:.3px;">3.0</div>
<div class="t " style="left:370.75px;transform:translateX(-50%);top:308.54px;font-size:10px;color:#fff;letter-spacing:.3px;">4.4</div>
<div class="t " style="left:469px;top:308.11px;font-size:10.5px;color:#fff;">5.</div>
<div class="t " style="left:231.5px;top:317.54px;font-size:10px;color:#fff;letter-spacing:0.095px;">Distance in km</div>
<div class="t m" style="left:22.2px;top:212.8px;font-size:13px;color:#fff;transform:rotate(-90deg);transform-origin:0 0;">km above MSL</div>
<div class="t " style="left:479px;top:34.15px;font-size:14px;color:#fff;"><span class="nw" style="transform:scaleX(.78)">maxdz</span></div>
<div class="t " style="left:493px;top:49.53px;font-size:16.5px;color:#fff;"><span class="nw" style="transform:scaleX(.66)">30.0</span></div>
<div class="t " style="left:493px;top:60.53px;font-size:16.5px;color:#fff;"><span class="nw" style="transform:scaleX(.66)">27.5</span></div>
<div class="t " style="left:493px;top:71.53px;font-size:16.5px;color:#fff;"><span class="nw" style="transform:scaleX(.66)">25.0</span></div>
<div class="t " style="left:493px;top:82.53px;font-size:16.5px;color:#fff;"><span class="nw" style="transform:scaleX(.66)">22.5</span></div>
<div class="t " style="left:493px;top:93.53px;font-size:16.5px;color:#fff;"><span class="nw" style="transform:scaleX(.66)">20.0</span></div>
<div class="t " style="left:493px;top:104.53px;font-size:16.5px;color:#fff;"><span class="nw" style="transform:scaleX(.66)">17.5</span></div>
<div class="t " style="left:493px;top:115.53px;font-size:16.5px;color:#fff;"><span class="nw" style="transform:scaleX(.66)">15.0</span></div>
<div class="t " style="left:493px;top:126.53px;font-size:16.5px;color:#fff;"><span class="nw" style="transform:scaleX(.66)">12.5</span></div>
<div class="t " style="left:493px;top:137.53px;font-size:16.5px;color:#fff;"><span class="nw" style="transform:scaleX(.66)">10.0</span></div>
<div class="t " style="left:493px;top:148.53px;font-size:16.5px;color:#fff;"><span class="nw" style="transform:scaleX(.66)">7.5</span></div>
<div class="t " style="left:493px;top:159.53px;font-size:16.5px;color:#fff;"><span class="nw" style="transform:scaleX(.66)">5.0</span></div>
<div class="t " style="left:493px;top:170.53px;font-size:16.5px;color:#fff;"><span class="nw" style="transform:scaleX(.66)">2.5</span></div>
<div class="t " style="left:493px;top:181.53px;font-size:16.5px;color:#fff;"><span class="nw" style="transform:scaleX(.66)">0.0</span></div>
<div class="t " style="left:493px;top:192.53px;font-size:16.5px;color:#fff;"><span class="nw" style="transform:scaleX(.66)"><span class="hy" style="width:0.58em;transform:scaleX(1.6)">-</span>2.5</span></div>
<div class="t " style="left:493px;top:203.53px;font-size:16.5px;color:#fff;"><span class="nw" style="transform:scaleX(.66)"><span class="hy" style="width:0.58em;transform:scaleX(1.6)">-</span>5.0</span></div>
<div class="t " style="left:493px;top:214.53px;font-size:16.5px;color:#fff;"><span class="nw" style="transform:scaleX(.66)"><span class="hy" style="width:0.58em;transform:scaleX(1.6)">-</span>7.5</span></div>
<div class="t " style="left:493px;top:225.53px;font-size:16.5px;color:#fff;"><span class="nw" style="transform:scaleX(.66)"><span class="hy" style="width:0.58em;transform:scaleX(1.6)">-</span>10.0</span></div>
<div class="t " style="left:493px;top:236.53px;font-size:16.5px;color:#fff;"><span class="nw" style="transform:scaleX(.66)"><span class="hy" style="width:0.58em;transform:scaleX(1.6)">-</span>12.5</span></div>
<div class="t " style="left:493px;top:247.53px;font-size:16.5px;color:#fff;"><span class="nw" style="transform:scaleX(.66)"><span class="hy" style="width:0.58em;transform:scaleX(1.6)">-</span>15.0</span></div>
<div class="t " style="left:493px;top:258.53px;font-size:16.5px;color:#fff;"><span class="nw" style="transform:scaleX(.66)"><span class="hy" style="width:0.58em;transform:scaleX(1.6)">-</span>17.5</span></div>
<div class="t " style="left:493px;top:269.53px;font-size:16.5px;color:#fff;"><span class="nw" style="transform:scaleX(.66)"><span class="hy" style="width:0.58em;transform:scaleX(1.6)">-</span>20.0</span></div>
<div class="t " style="left:493px;top:280.53px;font-size:16.5px;color:#fff;"><span class="nw" style="transform:scaleX(.66)"><span class="hy" style="width:0.58em;transform:scaleX(1.6)">-</span>22.5</span></div>
<div class="t " style="left:493px;top:291.53px;font-size:16.5px;color:#fff;"><span class="nw" style="transform:scaleX(.66)"><span class="hy" style="width:0.58em;transform:scaleX(1.6)">-</span>25.0</span></div>
<div class="t " style="left:493px;top:302.53px;font-size:16.5px;color:#fff;"><span class="nw" style="transform:scaleX(.66)"><span class="hy" style="width:0.58em;transform:scaleX(1.6)">-</span>27.5</span></div>
<div class="t " style="left:493px;top:313.53px;font-size:16.5px;color:#fff;"><span class="nw" style="transform:scaleX(.66)"><span class="hy" style="width:0.58em;transform:scaleX(1.6)">-</span>30.0</span></div>
</div>
<div style="left:17px;top:954px;width:570px;height:12px;background:#FFF8DC;"></div>
<svg style="left:17px;top:954px" width="40" height="12" viewBox="17 954 40 12" shape-rendering="crispEdges"><rect x="19" y="954" width="12" height="11" fill="url(#ckb)"/><rect x="32" y="954" width="1" height="12" fill="#000"/><rect x="35" y="954" width="9" height="9" fill="#228B22"/></svg>
<div class="dot" style="left:17px;top:428px;width:574px;height:526px;overflow:hidden;">
<div style="left:1px;top:1px;width:572px;height:524px;background:#000;"></div>
<svg width="574" height="526" viewBox="17 428 574 526" shape-rendering="crispEdges"><rect x="104" y="500" width="8" height="9" fill="#C0C0C0"/><rect x="110" y="504" width="3" height="4" fill="#064F14"/><rect x="170" y="510" width="6" height="5" fill="#078A10"/><rect x="177" y="501" width="6" height="6" fill="#064F14"/><rect x="165" y="522" width="8" height="6" fill="#078A10"/><rect x="180" y="520" width="7" height="7" fill="#B4500F"/><rect x="177" y="520" width="4" height="6" fill="#078A10"/><rect x="190" y="510" width="8" height="7" fill="#064F14"/><rect x="244" y="498" width="9" height="5" fill="#064F14"/><rect x="254" y="498" width="7" height="2" fill="#B4500F"/><rect x="266" y="498" width="5" height="4" fill="#078A10"/><rect x="163" y="498" width="6" height="2" fill="#C0C0C0"/><rect x="275" y="508" width="5" height="6" fill="#C0C0C0"/><rect x="278" y="510" width="3" height="4" fill="#078A10"/><rect x="275" y="512" width="3" height="2" fill="#B4500F"/><rect x="284" y="526" width="6" height="6" fill="#E0A070"/><rect x="141" y="542" width="8" height="6" fill="#064F14"/><rect x="148" y="542" width="2" height="4" fill="#C0C0C0"/><rect x="78" y="558" width="7" height="6" fill="#064F14"/><rect x="141" y="559" width="6" height="6" fill="#078A10"/><rect x="102" y="567" width="7" height="8" fill="#064F14"/><rect x="108" y="569" width="5" height="6" fill="#078A10"/><rect x="167" y="561" width="4" height="6" fill="#078A10"/><rect x="166" y="569" width="4" height="6" fill="#C0C0C0"/><rect x="175" y="576" width="5" height="5" fill="#C0C0C0"/><rect x="174" y="576" width="5" height="2" fill="#B4500F"/><rect x="205" y="560" width="6" height="5" fill="#078A10"/><rect x="204" y="562" width="3" height="3" fill="#C0C0C0"/><rect x="217" y="561" width="6" height="6" fill="#078A10"/><rect x="236" y="565" width="6" height="4" fill="#B4500F"/><rect x="236" y="564" width="6" height="2" fill="#078A10"/><rect x="242" y="549" width="3" height="8" fill="#06AA10"/><rect x="264" y="549" width="5" height="4" fill="#06AA10"/><rect x="232" y="540" width="3" height="3" fill="#064F14"/><rect x="220" y="573" width="4" height="4" fill="#00FF00"/><rect x="246" y="573" width="2" height="4" fill="#00FF00"/><rect x="310" y="544" width="5" height="8" fill="#078A10"/><rect x="308" y="552" width="3" height="4" fill="#06AA10"/><rect x="316" y="553" width="4" height="4" fill="#06AA10"/><rect x="342" y="552" width="5" height="6" fill="#C0C0C0"/><rect x="340" y="552" width="4" height="3" fill="#078A10"/><rect x="336" y="562" width="5" height="5" fill="#C0C0C0"/><rect x="338" y="564" width="5" height="5" fill="#078A10"/><rect x="340" y="562" width="2" height="2" fill="#B4500F"/><rect x="312" y="571" width="5" height="4" fill="#00FF00"/><rect x="294" y="573" width="6" height="4" fill="#00FF00"/><rect x="282" y="576" width="6" height="5" fill="#06AA10"/><rect x="256" y="576" width="9" height="3" fill="#064F14"/><rect x="265" y="578" width="4" height="3" fill="#078A10"/><rect x="359" y="522" width="7" height="8" fill="#064F14"/><rect x="358" y="522" width="3" height="5" fill="#078A10"/><rect x="366" y="542" width="7" height="4" fill="#078A10"/><rect x="388" y="588" width="6" height="9" fill="#078A10"/><rect x="392" y="594" width="3" height="4" fill="#C0C0C0"/><rect x="393" y="590" width="2" height="3" fill="#B4500F"/><rect x="198" y="580" width="6" height="7" fill="#064F14"/><rect x="160" y="586" width="6" height="4" fill="#078A10"/><rect x="142" y="587" width="5" height="4" fill="#078A10"/><rect x="117" y="588" width="6" height="5" fill="#B4500F"/><rect x="120" y="590" width="3" height="3" fill="#C0C0C0"/><rect x="116" y="592" width="3" height="3" fill="#078A10"/><rect x="170" y="598" width="5" height="4" fill="#B4500F"/><rect x="178" y="598" width="5" height="6" fill="#C0C0C0"/><rect x="183" y="597" width="2" height="6" fill="#078A10"/><rect x="190" y="603" width="5" height="4" fill="#078A10"/><rect x="234" y="598" width="5" height="4" fill="#B4500F"/><rect x="234" y="602" width="3" height="3" fill="#078A10"/><rect x="254" y="588" width="4" height="3" fill="#C0C0C0"/><rect x="256" y="587" width="3" height="2" fill="#078A10"/><rect x="253" y="589" width="2" height="2" fill="#B4500F"/><rect x="87" y="600" width="8" height="8" fill="#C0C0C0"/><rect x="94" y="600" width="4" height="3" fill="#C0C0C0"/><rect x="96" y="602" width="7" height="9" fill="#064F14"/><rect x="110" y="607" width="7" height="6" fill="#064F14"/><rect x="126" y="603" width="4" height="9" fill="#078A10"/><rect x="130" y="600" width="3" height="5" fill="#078A10"/><rect x="134" y="626" width="5" height="5" fill="#06AA10"/><rect x="112" y="654" width="5" height="8" fill="#078A10"/><rect x="174" y="645" width="4" height="4" fill="#00FF00"/><rect x="85" y="673" width="7" height="6" fill="#078A10"/><rect x="121" y="666" width="3" height="4" fill="#078A10"/><rect x="137" y="672" width="4" height="3" fill="#078A10"/><rect x="150" y="670" width="5" height="5" fill="#078A10"/><rect x="166" y="676" width="2" height="5" fill="#00FF00"/><rect x="128" y="692" width="4" height="5" fill="#078A10"/><rect x="170" y="688" width="4" height="5" fill="#078A10"/><rect x="172" y="690" width="3" height="2" fill="#E0A070"/><rect x="134" y="708" width="5" height="6" fill="#078A10"/><rect x="336" y="626" width="4" height="2" fill="#00FF00"/><rect x="347" y="620" width="2" height="5" fill="#06AA10"/><rect x="326" y="634" width="4" height="2" fill="#06AA10"/><rect x="301" y="625" width="4" height="2" fill="#06AA10"/><rect x="362" y="658" width="5" height="5" fill="#078A10"/><rect x="367" y="664" width="4" height="5" fill="#00FF00"/><rect x="366" y="662" width="3" height="3" fill="#00FF00"/><rect x="388" y="666" width="5" height="5" fill="#078A10"/><rect x="382" y="681" width="4" height="6" fill="#078A10"/><rect x="388" y="690" width="5" height="4" fill="#078A10"/><rect x="421" y="526" width="6" height="9" fill="#064F14"/><rect x="418" y="604" width="5" height="7" fill="#078A10"/><rect x="418" y="629" width="7" height="4" fill="#078A10"/><rect x="416" y="650" width="5" height="7" fill="#C0C0C0"/><rect x="417" y="657" width="6" height="4" fill="#064F14"/><rect x="332" y="699" width="3" height="3" fill="#00FF00"/><rect x="338" y="646" width="4" height="3" fill="#078A10"/><rect x="319" y="640" width="2" height="3" fill="#06AA10"/><rect x="309" y="657" width="2" height="2" fill="#00BFFF"/><rect x="322" y="643" width="2" height="2" fill="#00BFFF"/><rect x="87" y="720" width="7" height="7" fill="#078A10"/><rect x="146" y="722" width="2" height="5" fill="#078A10"/><rect x="200" y="740" width="5" height="5" fill="#00FF00"/><rect x="199" y="724" width="5" height="4" fill="#00BFFF"/><rect x="163" y="761" width="5" height="6" fill="#078A10"/><rect x="178" y="780" width="5" height="5" fill="#078A10"/><rect x="170" y="788" width="7" height="6" fill="#064F14"/><rect x="181" y="793" width="5" height="4" fill="#064F14"/><rect x="122" y="793" width="7" height="6" fill="#C0C0C0"/><rect x="182" y="805" width="5" height="7" fill="#C0C0C0"/><rect x="184" y="806" width="6" height="8" fill="#078A10"/><rect x="214" y="807" width="7" height="7" fill="#078A10"/><rect x="224" y="790" width="7" height="5" fill="#078A10"/><rect x="227" y="784" width="5" height="4" fill="#078A10"/><rect x="231" y="834" width="4" height="7" fill="#064F14"/><rect x="257" y="826" width="5" height="5" fill="#078A10"/><rect x="271" y="824" width="4" height="4" fill="#064F14"/><rect x="262" y="794" width="4" height="9" fill="#078A10"/><rect x="260" y="784" width="5" height="4" fill="#C0C0C0"/><rect x="248" y="770" width="5" height="5" fill="#B4500F"/><rect x="243" y="764" width="2" height="5" fill="#00FF00"/><rect x="255" y="763" width="2" height="2" fill="#00FF00"/><rect x="256" y="770" width="4" height="5" fill="#06AA10"/><rect x="264" y="768" width="5" height="6" fill="#06AA10"/><rect x="274" y="768" width="5" height="5" fill="#00FF00"/><rect x="288" y="763" width="6" height="10" fill="#06AA10"/><rect x="284" y="762" width="3" height="5" fill="#06AA10"/><rect x="289" y="784" width="4" height="4" fill="#078A10"/><rect x="298" y="778" width="5" height="4" fill="#C0C0C0"/><rect x="300" y="782" width="4" height="3" fill="#078A10"/><rect x="308" y="781" width="7" height="4" fill="#C0C0C0"/><rect x="312" y="782" width="3" height="3" fill="#B4500F"/><rect x="320" y="790" width="7" height="5" fill="#C0C0C0"/><rect x="324" y="791" width="3" height="4" fill="#B4500F"/><rect x="330" y="792" width="6" height="3" fill="#064F14"/><rect x="338" y="768" width="6" height="5" fill="#078A10"/><rect x="338" y="776" width="6" height="4" fill="#064F14"/><rect x="324" y="762" width="3" height="2" fill="#078A10"/><rect x="340" y="786" width="7" height="7" fill="#078A10"/><rect x="342" y="795" width="6" height="7" fill="#B4500F"/><rect x="346" y="794" width="3" height="4" fill="#06AA10"/><rect x="367" y="799" width="7" height="6" fill="#C0C0C0"/><rect x="371" y="798" width="4" height="3" fill="#C0C0C0"/><rect x="310" y="795" width="5" height="4" fill="#078A10"/><rect x="304" y="796" width="5" height="6" fill="#078A10"/><rect x="293" y="803" width="5" height="4" fill="#064F14"/><rect x="283" y="815" width="6" height="4" fill="#C0C0C0"/><rect x="284" y="816" width="3" height="3" fill="#B4500F"/><rect x="284" y="818" width="8" height="3" fill="#064F14"/><rect x="295" y="815" width="8" height="4" fill="#C0C0C0"/><rect x="309" y="814" width="8" height="5" fill="#C0C0C0"/><rect x="309" y="818" width="6" height="3" fill="#064F14"/><rect x="300" y="822" width="4" height="4" fill="#078A10"/><rect x="302" y="828" width="5" height="7" fill="#078A10"/><rect x="328" y="828" width="7" height="7" fill="#C0C0C0"/><rect x="320" y="836" width="7" height="7" fill="#078A10"/><rect x="293" y="845" width="5" height="7" fill="#064F14"/><rect x="346" y="832" width="7" height="7" fill="#064F14"/><rect x="354" y="822" width="6" height="6" fill="#064F14"/><rect x="360" y="811" width="5" height="5" fill="#078A10"/><rect x="368" y="818" width="7" height="7" fill="#078A10"/><rect x="372" y="775" width="7" height="4" fill="#064F14"/><rect x="360" y="732" width="6" height="5" fill="#078A10"/><rect x="362" y="740" width="4" height="5" fill="#078A10"/><rect x="357" y="737" width="4" height="4" fill="#064F14"/><rect x="322" y="730" width="5" height="5" fill="#06AA10"/><rect x="330" y="729" width="5" height="5" fill="#00FF00"/><rect x="324" y="736" width="5" height="3" fill="#06AA10"/><rect x="320" y="734" width="3" height="4" fill="#E0A070"/><rect x="313" y="748" width="6" height="3" fill="#06AA10"/><rect x="310" y="751" width="4" height="4" fill="#078A10"/><rect x="289" y="738" width="3" height="8" fill="#B4500F"/><rect x="290" y="739" width="3" height="4" fill="#C0C0C0"/><rect x="294" y="743" width="6" height="4" fill="#06AA10"/><rect x="278" y="746" width="3" height="3" fill="#078A10"/><rect x="274" y="730" width="4" height="4" fill="#00BFFF"/><rect x="260" y="727" width="4" height="2" fill="#06AA10"/><rect x="262" y="735" width="3" height="2" fill="#06AA10"/><rect x="260" y="742" width="3" height="2" fill="#00FF00"/><rect x="248" y="740" width="5" height="2" fill="#06AA10"/><rect x="333" y="698" width="3" height="4" fill="#00FF00"/><rect x="388" y="690" width="5" height="4" fill="#078A10"/><rect x="415" y="732" width="8" height="8" fill="#078A10"/><rect x="430" y="732" width="6" height="7" fill="#064F14"/><rect x="404" y="736" width="7" height="4" fill="#078A10"/><rect x="414" y="738" width="7" height="3" fill="#C0C0C0"/><rect x="411" y="761" width="6" height="7" fill="#C0C0C0"/><rect x="409" y="765" width="6" height="5" fill="#B4500F"/><rect x="371" y="775" width="7" height="4" fill="#064F14"/><rect x="400" y="814" width="7" height="7" fill="#064F14"/><rect x="236" y="740" width="2" height="2" fill="#00FF00"/><rect x="235" y="734" width="2" height="2" fill="#007FFF"/><rect x="215" y="725" width="2" height="2" fill="#007FFF"/><rect x="208" y="729" width="3" height="2" fill="#00BFFF"/><rect x="312" y="710" width="5" height="3" fill="#00FF00"/><rect x="318" y="712" width="3" height="3" fill="#06AA10"/><rect x="297" y="716" width="4" height="2" fill="#06AA10"/><rect x="281" y="710" width="4" height="3" fill="#00BFFF"/><rect x="289" y="716" width="4" height="2" fill="#00BFFF"/><rect x="268" y="716" width="5" height="3" fill="#00FF00"/><rect x="272" y="718" width="5" height="4" fill="#E0A070"/><rect x="278" y="717" width="3" height="4" fill="#C0C0C0"/><rect x="296" y="716" width="4" height="4" fill="#B4500F"/><rect x="300" y="714" width="3" height="4" fill="#C0C0C0"/><rect x="295" y="692" width="4" height="3" fill="#C0C0C0"/><rect x="298" y="694" width="5" height="3" fill="#00FF00"/><rect x="300" y="691" width="5" height="2" fill="#00FF00"/><rect x="294" y="696" width="2" height="2" fill="#06AA10"/><rect x="304" y="698" width="2" height="3" fill="#06AA10"/><rect x="252" y="608" width="4" height="2" fill="#C0C0C0"/><rect x="242" y="599" width="2" height="2" fill="#C0C0C0"/><rect x="198" y="614" width="5" height="2" fill="#078A10"/><rect x="229" y="589" width="2" height="2" fill="#00BFFF"/><rect x="257" y="609" width="2" height="2" fill="#00BFFF"/><rect x="253" y="615" width="2" height="2" fill="#007FFF"/><rect x="255" y="615" width="2" height="2" fill="#007FFF"/><rect x="231" y="619" width="2" height="2" fill="#00FF00"/><rect x="237" y="619" width="2" height="2" fill="#00BFFF"/><rect x="249" y="619" width="2" height="2" fill="#00BFFF"/><rect x="255" y="619" width="2" height="2" fill="#00BFFF"/><rect x="263" y="619" width="2" height="2" fill="#00BFFF"/><rect x="251" y="621" width="2" height="2" fill="#007FFF"/><rect x="255" y="621" width="2" height="2" fill="#00BFFF"/><rect x="261" y="621" width="2" height="2" fill="#00BFFF"/><rect x="263" y="621" width="2" height="2" fill="#00BFFF"/><rect x="237" y="623" width="2" height="2" fill="#00BFFF"/><rect x="241" y="623" width="2" height="2" fill="#007FFF"/><rect x="243" y="623" width="2" height="2" fill="#00BFFF"/><rect x="251" y="623" width="2" height="2" fill="#00BFFF"/><rect x="259" y="623" width="2" height="2" fill="#00BFFF"/><rect x="265" y="623" width="2" height="2" fill="#00BFFF"/><rect x="271" y="623" width="2" height="2" fill="#00BFFF"/><rect x="275" y="623" width="2" height="2" fill="#00BFFF"/><rect x="225" y="625" width="2" height="2" fill="#007FFF"/><rect x="227" y="625" width="2" height="2" fill="#00BFFF"/><rect x="229" y="625" width="2" height="2" fill="#00BFFF"/><rect x="231" y="625" width="2" height="2" fill="#00BFFF"/><rect x="233" y="625" width="2" height="2" fill="#00BFFF"/><rect x="235" y="625" width="2" height="2" fill="#00BFFF"/><rect x="245" y="625" width="2" height="2" fill="#00BFFF"/><rect x="247" y="625" width="2" height="2" fill="#00FF00"/><rect x="249" y="625" width="2" height="2" fill="#00BFFF"/><rect x="251" y="625" width="2" height="2" fill="#00BFFF"/><rect x="253" y="625" width="2" height="2" fill="#00BFFF"/><rect x="255" y="625" width="2" height="2" fill="#007FFF"/><rect x="257" y="625" width="2" height="2" fill="#0000D2"/><rect x="259" y="625" width="2" height="2" fill="#00BFFF"/><rect x="261" y="625" width="2" height="2" fill="#007FFF"/><rect x="263" y="625" width="2" height="2" fill="#007FFF"/><rect x="269" y="625" width="2" height="2" fill="#00BFFF"/><rect x="231" y="627" width="2" height="2" fill="#00BFFF"/><rect x="235" y="627" width="2" height="2" fill="#007FFF"/><rect x="239" y="627" width="2" height="2" fill="#007FFF"/><rect x="241" y="627" width="2" height="2" fill="#007FFF"/><rect x="243" y="627" width="2" height="2" fill="#0000D2"/><rect x="245" y="627" width="2" height="2" fill="#007FFF"/><rect x="249" y="627" width="2" height="2" fill="#00BFFF"/><rect x="251" y="627" width="2" height="2" fill="#007FFF"/><rect x="253" y="627" width="2" height="2" fill="#007FFF"/><rect x="255" y="627" width="2" height="2" fill="#007FFF"/><rect x="257" y="627" width="2" height="2" fill="#00BFFF"/><rect x="261" y="627" width="2" height="2" fill="#0000D2"/><rect x="263" y="627" width="2" height="2" fill="#007FFF"/><rect x="265" y="627" width="2" height="2" fill="#007FFF"/><rect x="295" y="627" width="2" height="2" fill="#00BFFF"/><rect x="231" y="629" width="2" height="2" fill="#00BFFF"/><rect x="233" y="629" width="2" height="2" fill="#00BFFF"/><rect x="237" y="629" width="2" height="2" fill="#007FFF"/><rect x="239" y="629" width="2" height="2" fill="#0000D2"/><rect x="243" y="629" width="2" height="2" fill="#007FFF"/><rect x="247" y="629" width="2" height="2" fill="#00BFFF"/><rect x="249" y="629" width="2" height="2" fill="#0000D2"/><rect x="251" y="629" width="2" height="2" fill="#00BFFF"/><rect x="253" y="629" width="2" height="2" fill="#00FF00"/><rect x="255" y="629" width="2" height="2" fill="#00BFFF"/><rect x="259" y="629" width="2" height="2" fill="#00BFFF"/><rect x="261" y="629" width="2" height="2" fill="#00BFFF"/><rect x="265" y="629" width="2" height="2" fill="#0000D2"/><rect x="267" y="629" width="2" height="2" fill="#007FFF"/><rect x="269" y="629" width="2" height="2" fill="#007FFF"/><rect x="271" y="629" width="2" height="2" fill="#00BFFF"/><rect x="273" y="629" width="2" height="2" fill="#007FFF"/><rect x="281" y="629" width="2" height="2" fill="#00FF00"/><rect x="219" y="631" width="2" height="2" fill="#00BFFF"/><rect x="221" y="631" width="2" height="2" fill="#007FFF"/><rect x="223" y="631" width="2" height="2" fill="#00BFFF"/><rect x="225" y="631" width="2" height="2" fill="#00BFFF"/><rect x="227" y="631" width="2" height="2" fill="#00BFFF"/><rect x="233" y="631" width="2" height="2" fill="#007FFF"/><rect x="235" y="631" width="2" height="2" fill="#0000D2"/><rect x="237" y="631" width="2" height="2" fill="#00BFFF"/><rect x="239" y="631" width="2" height="2" fill="#007FFF"/><rect x="241" y="631" width="2" height="2" fill="#00BFFF"/><rect x="243" y="631" width="2" height="2" fill="#007FFF"/><rect x="245" y="631" width="2" height="2" fill="#007FFF"/><rect x="249" y="631" width="2" height="2" fill="#00BFFF"/><rect x="251" y="631" width="2" height="2" fill="#0000D2"/><rect x="255" y="631" width="2" height="2" fill="#00BFFF"/><rect x="257" y="631" width="2" height="2" fill="#00BFFF"/><rect x="259" y="631" width="2" height="2" fill="#00BFFF"/><rect x="267" y="631" width="2" height="2" fill="#00BFFF"/><rect x="269" y="631" width="2" height="2" fill="#007FFF"/><rect x="273" y="631" width="2" height="2" fill="#00BFFF"/><rect x="275" y="631" width="2" height="2" fill="#007FFF"/><rect x="279" y="631" width="2" height="2" fill="#00BFFF"/><rect x="287" y="631" width="2" height="2" fill="#00FF00"/><rect x="217" y="633" width="2" height="2" fill="#00BFFF"/><rect x="219" y="633" width="2" height="2" fill="#00BFFF"/><rect x="223" y="633" width="2" height="2" fill="#00BFFF"/><rect x="225" y="633" width="2" height="2" fill="#00BFFF"/><rect x="229" y="633" width="2" height="2" fill="#007FFF"/><rect x="231" y="633" width="2" height="2" fill="#00BFFF"/><rect x="233" y="633" width="2" height="2" fill="#007FFF"/><rect x="235" y="633" width="2" height="2" fill="#00BFFF"/><rect x="239" y="633" width="2" height="2" fill="#007FFF"/><rect x="241" y="633" width="2" height="2" fill="#00BFFF"/><rect x="243" y="633" width="2" height="2" fill="#007FFF"/><rect x="245" y="633" width="2" height="2" fill="#00BFFF"/><rect x="247" y="633" width="2" height="2" fill="#0000D2"/><rect x="249" y="633" width="2" height="2" fill="#00BFFF"/><rect x="251" y="633" width="2" height="2" fill="#00BFFF"/><rect x="253" y="633" width="2" height="2" fill="#0000D2"/><rect x="255" y="633" width="2" height="2" fill="#0014AA"/><rect x="257" y="633" width="2" height="2" fill="#007FFF"/><rect x="259" y="633" width="2" height="2" fill="#007FFF"/><rect x="261" y="633" width="2" height="2" fill="#007FFF"/><rect x="263" y="633" width="2" height="2" fill="#00BFFF"/><rect x="265" y="633" width="2" height="2" fill="#007FFF"/><rect x="267" y="633" width="2" height="2" fill="#0000D2"/><rect x="273" y="633" width="2" height="2" fill="#007FFF"/><rect x="277" y="633" width="2" height="2" fill="#007FFF"/><rect x="279" y="633" width="2" height="2" fill="#00BFFF"/><rect x="285" y="633" width="2" height="2" fill="#007FFF"/><rect x="211" y="635" width="2" height="2" fill="#007FFF"/><rect x="215" y="635" width="2" height="2" fill="#007FFF"/><rect x="219" y="635" width="2" height="2" fill="#00BFFF"/><rect x="221" y="635" width="2" height="2" fill="#00BFFF"/><rect x="223" y="635" width="2" height="2" fill="#00BFFF"/><rect x="225" y="635" width="2" height="2" fill="#007FFF"/><rect x="227" y="635" width="2" height="2" fill="#00BFFF"/><rect x="229" y="635" width="2" height="2" fill="#00BFFF"/><rect x="231" y="635" width="2" height="2" fill="#0000D2"/><rect x="233" y="635" width="2" height="2" fill="#00BFFF"/><rect x="235" y="635" width="2" height="2" fill="#0000D2"/><rect x="237" y="635" width="2" height="2" fill="#00BFFF"/><rect x="239" y="635" width="2" height="2" fill="#0000D2"/><rect x="241" y="635" width="2" height="2" fill="#00BFFF"/><rect x="243" y="635" width="2" height="2" fill="#0000D2"/><rect x="245" y="635" width="2" height="2" fill="#0000D2"/><rect x="247" y="635" width="2" height="2" fill="#0014AA"/><rect x="249" y="635" width="2" height="2" fill="#007FFF"/><rect x="251" y="635" width="2" height="2" fill="#0014AA"/><rect x="253" y="635" width="2" height="2" fill="#0014AA"/><rect x="257" y="635" width="2" height="2" fill="#0000D2"/><rect x="259" y="635" width="2" height="2" fill="#0000D2"/><rect x="261" y="635" width="2" height="2" fill="#0000D2"/><rect x="267" y="635" width="2" height="2" fill="#007FFF"/><rect x="269" y="635" width="2" height="2" fill="#007FFF"/><rect x="273" y="635" width="2" height="2" fill="#00BFFF"/><rect x="275" y="635" width="2" height="2" fill="#0000D2"/><rect x="277" y="635" width="2" height="2" fill="#007FFF"/><rect x="279" y="635" width="2" height="2" fill="#00BFFF"/><rect x="281" y="635" width="2" height="2" fill="#007FFF"/><rect x="283" y="635" width="2" height="2" fill="#00FF00"/><rect x="285" y="635" width="2" height="2" fill="#00BFFF"/><rect x="207" y="637" width="2" height="2" fill="#00BFFF"/><rect x="217" y="637" width="2" height="2" fill="#00BFFF"/><rect x="223" y="637" width="2" height="2" fill="#007FFF"/><rect x="225" y="637" width="2" height="2" fill="#007FFF"/><rect x="227" y="637" width="2" height="2" fill="#00BFFF"/><rect x="229" y="637" width="2" height="2" fill="#007FFF"/><rect x="233" y="637" width="2" height="2" fill="#007FFF"/><rect x="239" y="637" width="2" height="2" fill="#00BFFF"/><rect x="241" y="637" width="2" height="2" fill="#007FFF"/><rect x="243" y="637" width="2" height="2" fill="#007FFF"/><rect x="245" y="637" width="2" height="2" fill="#0000D2"/><rect x="247" y="637" width="2" height="2" fill="#00BFFF"/><rect x="251" y="637" width="2" height="2" fill="#007FFF"/><rect x="255" y="637" width="2" height="2" fill="#0000D2"/><rect x="259" y="637" width="2" height="2" fill="#0014AA"/><rect x="267" y="637" width="2" height="2" fill="#0000D2"/><rect x="269" y="637" width="2" height="2" fill="#00BFFF"/><rect x="271" y="637" width="2" height="2" fill="#007FFF"/><rect x="273" y="637" width="2" height="2" fill="#0000D2"/><rect x="275" y="637" width="2" height="2" fill="#00BFFF"/><rect x="277" y="637" width="2" height="2" fill="#007FFF"/><rect x="281" y="637" width="2" height="2" fill="#0000D2"/><rect x="283" y="637" width="2" height="2" fill="#00BFFF"/><rect x="285" y="637" width="2" height="2" fill="#00BFFF"/><rect x="199" y="639" width="2" height="2" fill="#00BFFF"/><rect x="213" y="639" width="2" height="2" fill="#00BFFF"/><rect x="217" y="639" width="2" height="2" fill="#00BFFF"/><rect x="227" y="639" width="2" height="2" fill="#007FFF"/><rect x="229" y="639" width="2" height="2" fill="#00BFFF"/><rect x="231" y="639" width="2" height="2" fill="#00BFFF"/><rect x="233" y="639" width="2" height="2" fill="#00BFFF"/><rect x="235" y="639" width="2" height="2" fill="#007FFF"/><rect x="237" y="639" width="2" height="2" fill="#00BFFF"/><rect x="241" y="639" width="2" height="2" fill="#0014AA"/><rect x="245" y="639" width="2" height="2" fill="#0000D2"/><rect x="247" y="639" width="2" height="2" fill="#00FF00"/><rect x="249" y="639" width="2" height="2" fill="#0000D2"/><rect x="251" y="639" width="2" height="2" fill="#0000D2"/><rect x="253" y="639" width="2" height="2" fill="#0000D2"/><rect x="259" y="639" width="2" height="2" fill="#0000D2"/><rect x="263" y="639" width="2" height="2" fill="#007FFF"/><rect x="265" y="639" width="2" height="2" fill="#0000D2"/><rect x="267" y="639" width="2" height="2" fill="#007FFF"/><rect x="271" y="639" width="2" height="2" fill="#0000D2"/><rect x="277" y="639" width="2" height="2" fill="#00BFFF"/><rect x="279" y="639" width="2" height="2" fill="#007FFF"/><rect x="285" y="639" width="2" height="2" fill="#00BFFF"/><rect x="289" y="639" width="2" height="2" fill="#00BFFF"/><rect x="213" y="641" width="2" height="2" fill="#007FFF"/><rect x="215" y="641" width="2" height="2" fill="#007FFF"/><rect x="223" y="641" width="2" height="2" fill="#0000D2"/><rect x="227" y="641" width="2" height="2" fill="#00BFFF"/><rect x="233" y="641" width="2" height="2" fill="#007FFF"/><rect x="235" y="641" width="2" height="2" fill="#007FFF"/><rect x="237" y="641" width="2" height="2" fill="#00BFFF"/><rect x="239" y="641" width="2" height="2" fill="#0000D2"/><rect x="241" y="641" width="2" height="2" fill="#0014AA"/><rect x="243" y="641" width="2" height="2" fill="#007FFF"/><rect x="245" y="641" width="2" height="2" fill="#0014AA"/><rect x="247" y="641" width="2" height="2" fill="#00BFFF"/><rect x="267" y="641" width="2" height="2" fill="#007FFF"/><rect x="269" y="641" width="2" height="2" fill="#0000D2"/><rect x="271" y="641" width="2" height="2" fill="#00BFFF"/><rect x="273" y="641" width="2" height="2" fill="#0000D2"/><rect x="275" y="641" width="2" height="2" fill="#00BFFF"/><rect x="277" y="641" width="2" height="2" fill="#0000D2"/><rect x="279" y="641" width="2" height="2" fill="#0000D2"/><rect x="281" y="641" width="2" height="2" fill="#007FFF"/><rect x="285" y="641" width="2" height="2" fill="#00BFFF"/><rect x="287" y="641" width="2" height="2" fill="#00BFFF"/><rect x="347" y="641" width="2" height="2" fill="#00BFFF"/><rect x="215" y="643" width="2" height="2" fill="#00BFFF"/><rect x="217" y="643" width="2" height="2" fill="#00BFFF"/><rect x="219" y="643" width="2" height="2" fill="#00BFFF"/><rect x="221" y="643" width="2" height="2" fill="#00BFFF"/><rect x="223" y="643" width="2" height="2" fill="#00BFFF"/><rect x="225" y="643" width="2" height="2" fill="#00BFFF"/><rect x="227" y="643" width="2" height="2" fill="#00BFFF"/><rect x="229" y="643" width="2" height="2" fill="#00BFFF"/><rect x="231" y="643" width="2" height="2" fill="#0000D2"/><rect x="233" y="643" width="2" height="2" fill="#0014AA"/><rect x="235" y="643" width="2" height="2" fill="#007FFF"/><rect x="237" y="643" width="2" height="2" fill="#06AA10"/><rect x="239" y="643" width="2" height="2" fill="#007FFF"/><rect x="241" y="643" width="2" height="2" fill="#0000D2"/><rect x="273" y="643" width="2" height="2" fill="#00BFFF"/><rect x="279" y="643" width="2" height="2" fill="#007FFF"/><rect x="283" y="643" width="2" height="2" fill="#0000D2"/><rect x="287" y="643" width="2" height="2" fill="#0000D2"/><rect x="289" y="643" width="2" height="2" fill="#00BFFF"/><rect x="209" y="645" width="2" height="2" fill="#00BFFF"/><rect x="213" y="645" width="2" height="2" fill="#00BFFF"/><rect x="217" y="645" width="2" height="2" fill="#007FFF"/><rect x="219" y="645" width="2" height="2" fill="#00BFFF"/><rect x="221" y="645" width="2" height="2" fill="#007FFF"/><rect x="223" y="645" width="2" height="2" fill="#007FFF"/><rect x="225" y="645" width="2" height="2" fill="#007FFF"/><rect x="227" y="645" width="2" height="2" fill="#0000D2"/><rect x="231" y="645" width="2" height="2" fill="#0000D2"/><rect x="235" y="645" width="2" height="2" fill="#007FFF"/><rect x="237" y="645" width="2" height="2" fill="#0000D2"/><rect x="275" y="645" width="2" height="2" fill="#007FFF"/><rect x="277" y="645" width="2" height="2" fill="#0000D2"/><rect x="279" y="645" width="2" height="2" fill="#007FFF"/><rect x="281" y="645" width="2" height="2" fill="#00BFFF"/><rect x="291" y="645" width="2" height="2" fill="#007FFF"/><rect x="325" y="645" width="2" height="2" fill="#00BFFF"/><rect x="205" y="647" width="2" height="2" fill="#00BFFF"/><rect x="209" y="647" width="2" height="2" fill="#00BFFF"/><rect x="211" y="647" width="2" height="2" fill="#00BFFF"/><rect x="213" y="647" width="2" height="2" fill="#007FFF"/><rect x="217" y="647" width="2" height="2" fill="#007FFF"/><rect x="221" y="647" width="2" height="2" fill="#00BFFF"/><rect x="223" y="647" width="2" height="2" fill="#007FFF"/><rect x="225" y="647" width="2" height="2" fill="#007FFF"/><rect x="227" y="647" width="2" height="2" fill="#007FFF"/><rect x="229" y="647" width="2" height="2" fill="#007FFF"/><rect x="231" y="647" width="2" height="2" fill="#007FFF"/><rect x="233" y="647" width="2" height="2" fill="#0000D2"/><rect x="235" y="647" width="2" height="2" fill="#00BFFF"/><rect x="281" y="647" width="2" height="2" fill="#007FFF"/><rect x="283" y="647" width="2" height="2" fill="#00BFFF"/><rect x="285" y="647" width="2" height="2" fill="#00BFFF"/><rect x="289" y="647" width="2" height="2" fill="#00BFFF"/><rect x="291" y="647" width="2" height="2" fill="#00BFFF"/><rect x="293" y="647" width="2" height="2" fill="#00BFFF"/><rect x="207" y="649" width="2" height="2" fill="#00BFFF"/><rect x="209" y="649" width="2" height="2" fill="#00BFFF"/><rect x="213" y="649" width="2" height="2" fill="#007FFF"/><rect x="215" y="649" width="2" height="2" fill="#00BFFF"/><rect x="217" y="649" width="2" height="2" fill="#06AA10"/><rect x="219" y="649" width="2" height="2" fill="#00BFFF"/><rect x="221" y="649" width="2" height="2" fill="#00BFFF"/><rect x="223" y="649" width="2" height="2" fill="#00BFFF"/><rect x="225" y="649" width="2" height="2" fill="#007FFF"/><rect x="227" y="649" width="2" height="2" fill="#0000D2"/><rect x="229" y="649" width="2" height="2" fill="#0014AA"/><rect x="231" y="649" width="2" height="2" fill="#007FFF"/><rect x="233" y="649" width="2" height="2" fill="#0014AA"/><rect x="281" y="649" width="2" height="2" fill="#0000D2"/><rect x="283" y="649" width="2" height="2" fill="#007FFF"/><rect x="289" y="649" width="2" height="2" fill="#0000D2"/><rect x="301" y="649" width="2" height="2" fill="#00BFFF"/><rect x="207" y="651" width="2" height="2" fill="#00BFFF"/><rect x="211" y="651" width="2" height="2" fill="#00BFFF"/><rect x="213" y="651" width="2" height="2" fill="#00BFFF"/><rect x="215" y="651" width="2" height="2" fill="#007FFF"/><rect x="217" y="651" width="2" height="2" fill="#007FFF"/><rect x="219" y="651" width="2" height="2" fill="#00BFFF"/><rect x="221" y="651" width="2" height="2" fill="#007FFF"/><rect x="223" y="651" width="2" height="2" fill="#007FFF"/><rect x="225" y="651" width="2" height="2" fill="#0000D2"/><rect x="227" y="651" width="2" height="2" fill="#007FFF"/><rect x="229" y="651" width="2" height="2" fill="#0000D2"/><rect x="281" y="651" width="2" height="2" fill="#0014AA"/><rect x="283" y="651" width="2" height="2" fill="#0014AA"/><rect x="285" y="651" width="2" height="2" fill="#0000D2"/><rect x="287" y="651" width="2" height="2" fill="#00BFFF"/><rect x="289" y="651" width="2" height="2" fill="#0000D2"/><rect x="291" y="651" width="2" height="2" fill="#007FFF"/><rect x="297" y="651" width="2" height="2" fill="#007FFF"/><rect x="203" y="653" width="2" height="2" fill="#00FF00"/><rect x="209" y="653" width="2" height="2" fill="#00BFFF"/><rect x="213" y="653" width="2" height="2" fill="#007FFF"/><rect x="215" y="653" width="2" height="2" fill="#007FFF"/><rect x="217" y="653" width="2" height="2" fill="#00BFFF"/><rect x="219" y="653" width="2" height="2" fill="#00BFFF"/><rect x="223" y="653" width="2" height="2" fill="#00BFFF"/><rect x="225" y="653" width="2" height="2" fill="#00BFFF"/><rect x="227" y="653" width="2" height="2" fill="#007FFF"/><rect x="229" y="653" width="2" height="2" fill="#0000D2"/><rect x="283" y="653" width="2" height="2" fill="#007FFF"/><rect x="289" y="653" width="2" height="2" fill="#00BFFF"/><rect x="291" y="653" width="2" height="2" fill="#007FFF"/><rect x="293" y="653" width="2" height="2" fill="#007FFF"/><rect x="203" y="655" width="2" height="2" fill="#00BFFF"/><rect x="207" y="655" width="2" height="2" fill="#00BFFF"/><rect x="211" y="655" width="2" height="2" fill="#007FFF"/><rect x="213" y="655" width="2" height="2" fill="#0000D2"/><rect x="215" y="655" width="2" height="2" fill="#007FFF"/><rect x="217" y="655" width="2" height="2" fill="#0000D2"/><rect x="219" y="655" width="2" height="2" fill="#007FFF"/><rect x="221" y="655" width="2" height="2" fill="#0000D2"/><rect x="223" y="655" width="2" height="2" fill="#00FF00"/><rect x="225" y="655" width="2" height="2" fill="#007FFF"/><rect x="227" y="655" width="2" height="2" fill="#007FFF"/><rect x="285" y="655" width="2" height="2" fill="#0000D2"/><rect x="289" y="655" width="2" height="2" fill="#0000D2"/><rect x="297" y="655" width="2" height="2" fill="#00BFFF"/><rect x="199" y="657" width="2" height="2" fill="#007FFF"/><rect x="209" y="657" width="2" height="2" fill="#0000D2"/><rect x="211" y="657" width="2" height="2" fill="#0000D2"/><rect x="213" y="657" width="2" height="2" fill="#007FFF"/><rect x="215" y="657" width="2" height="2" fill="#007FFF"/><rect x="217" y="657" width="2" height="2" fill="#00BFFF"/><rect x="219" y="657" width="2" height="2" fill="#0000D2"/><rect x="221" y="657" width="2" height="2" fill="#00FF00"/><rect x="223" y="657" width="2" height="2" fill="#0000D2"/><rect x="225" y="657" width="2" height="2" fill="#00FF00"/><rect x="291" y="657" width="2" height="2" fill="#00BFFF"/><rect x="203" y="659" width="2" height="2" fill="#00BFFF"/><rect x="205" y="659" width="2" height="2" fill="#00BFFF"/><rect x="207" y="659" width="2" height="2" fill="#007FFF"/><rect x="211" y="659" width="2" height="2" fill="#00BFFF"/><rect x="215" y="659" width="2" height="2" fill="#00BFFF"/><rect x="217" y="659" width="2" height="2" fill="#00BFFF"/><rect x="219" y="659" width="2" height="2" fill="#007FFF"/><rect x="223" y="659" width="2" height="2" fill="#0000D2"/><rect x="225" y="659" width="2" height="2" fill="#007FFF"/><rect x="287" y="659" width="2" height="2" fill="#0014AA"/><rect x="289" y="659" width="2" height="2" fill="#00BFFF"/><rect x="199" y="661" width="2" height="2" fill="#00BFFF"/><rect x="209" y="661" width="2" height="2" fill="#00BFFF"/><rect x="211" y="661" width="2" height="2" fill="#00BFFF"/><rect x="213" y="661" width="2" height="2" fill="#00BFFF"/><rect x="215" y="661" width="2" height="2" fill="#00BFFF"/><rect x="217" y="661" width="2" height="2" fill="#0000D2"/><rect x="219" y="661" width="2" height="2" fill="#0014AA"/><rect x="221" y="661" width="2" height="2" fill="#0000D2"/><rect x="223" y="661" width="2" height="2" fill="#0000D2"/><rect x="293" y="661" width="2" height="2" fill="#007FFF"/><rect x="295" y="661" width="2" height="2" fill="#00BFFF"/><rect x="299" y="661" width="2" height="2" fill="#00BFFF"/><rect x="305" y="661" width="2" height="2" fill="#00BFFF"/><rect x="199" y="663" width="2" height="2" fill="#00BFFF"/><rect x="201" y="663" width="2" height="2" fill="#007FFF"/><rect x="203" y="663" width="2" height="2" fill="#007FFF"/><rect x="209" y="663" width="2" height="2" fill="#007FFF"/><rect x="211" y="663" width="2" height="2" fill="#00BFFF"/><rect x="213" y="663" width="2" height="2" fill="#00BFFF"/><rect x="215" y="663" width="2" height="2" fill="#007FFF"/><rect x="217" y="663" width="2" height="2" fill="#0014AA"/><rect x="219" y="663" width="2" height="2" fill="#007FFF"/><rect x="221" y="663" width="2" height="2" fill="#007FFF"/><rect x="289" y="663" width="2" height="2" fill="#0000D2"/><rect x="297" y="663" width="2" height="2" fill="#007FFF"/><rect x="299" y="663" width="2" height="2" fill="#00BFFF"/><rect x="301" y="663" width="2" height="2" fill="#007FFF"/><rect x="307" y="663" width="2" height="2" fill="#00BFFF"/><rect x="203" y="665" width="2" height="2" fill="#00BFFF"/><rect x="205" y="665" width="2" height="2" fill="#007FFF"/><rect x="209" y="665" width="2" height="2" fill="#007FFF"/><rect x="211" y="665" width="2" height="2" fill="#007FFF"/><rect x="213" y="665" width="2" height="2" fill="#00BFFF"/><rect x="215" y="665" width="2" height="2" fill="#00BFFF"/><rect x="217" y="665" width="2" height="2" fill="#007FFF"/><rect x="219" y="665" width="2" height="2" fill="#0000D2"/><rect x="223" y="665" width="2" height="2" fill="#007FFF"/><rect x="289" y="665" width="2" height="2" fill="#007FFF"/><rect x="295" y="665" width="2" height="2" fill="#007FFF"/><rect x="201" y="667" width="2" height="2" fill="#00BFFF"/><rect x="205" y="667" width="2" height="2" fill="#007FFF"/><rect x="207" y="667" width="2" height="2" fill="#007FFF"/><rect x="209" y="667" width="2" height="2" fill="#00BFFF"/><rect x="211" y="667" width="2" height="2" fill="#007FFF"/><rect x="215" y="667" width="2" height="2" fill="#00BFFF"/><rect x="217" y="667" width="2" height="2" fill="#0014AA"/><rect x="219" y="667" width="2" height="2" fill="#0014AA"/><rect x="221" y="667" width="2" height="2" fill="#007FFF"/><rect x="293" y="667" width="2" height="2" fill="#0000D2"/><rect x="295" y="667" width="2" height="2" fill="#00BFFF"/><rect x="201" y="669" width="2" height="2" fill="#00BFFF"/><rect x="203" y="669" width="2" height="2" fill="#00BFFF"/><rect x="205" y="669" width="2" height="2" fill="#00BFFF"/><rect x="207" y="669" width="2" height="2" fill="#00BFFF"/><rect x="209" y="669" width="2" height="2" fill="#00BFFF"/><rect x="211" y="669" width="2" height="2" fill="#007FFF"/><rect x="213" y="669" width="2" height="2" fill="#00BFFF"/><rect x="215" y="669" width="2" height="2" fill="#007FFF"/><rect x="217" y="669" width="2" height="2" fill="#0014AA"/><rect x="219" y="669" width="2" height="2" fill="#007FFF"/><rect x="295" y="669" width="2" height="2" fill="#007FFF"/><rect x="297" y="669" width="2" height="2" fill="#007FFF"/><rect x="201" y="671" width="2" height="2" fill="#00BFFF"/><rect x="209" y="671" width="2" height="2" fill="#0000D2"/><rect x="211" y="671" width="2" height="2" fill="#007FFF"/><rect x="213" y="671" width="2" height="2" fill="#00BFFF"/><rect x="215" y="671" width="2" height="2" fill="#007FFF"/><rect x="217" y="671" width="2" height="2" fill="#007FFF"/><rect x="219" y="671" width="2" height="2" fill="#007FFF"/><rect x="221" y="671" width="2" height="2" fill="#00BFFF"/><rect x="295" y="671" width="2" height="2" fill="#00BFFF"/><rect x="301" y="671" width="2" height="2" fill="#00BFFF"/><rect x="199" y="673" width="2" height="2" fill="#00BFFF"/><rect x="201" y="673" width="2" height="2" fill="#00BFFF"/><rect x="207" y="673" width="2" height="2" fill="#007FFF"/><rect x="211" y="673" width="2" height="2" fill="#00BFFF"/><rect x="213" y="673" width="2" height="2" fill="#007FFF"/><rect x="215" y="673" width="2" height="2" fill="#0000D2"/><rect x="217" y="673" width="2" height="2" fill="#00BFFF"/><rect x="219" y="673" width="2" height="2" fill="#00BFFF"/><rect x="221" y="673" width="2" height="2" fill="#0000D2"/><rect x="291" y="673" width="2" height="2" fill="#0014AA"/><rect x="295" y="673" width="2" height="2" fill="#007FFF"/><rect x="299" y="673" width="2" height="2" fill="#007FFF"/><rect x="205" y="675" width="2" height="2" fill="#00BFFF"/><rect x="209" y="675" width="2" height="2" fill="#0000D2"/><rect x="211" y="675" width="2" height="2" fill="#00BFFF"/><rect x="213" y="675" width="2" height="2" fill="#00BFFF"/><rect x="215" y="675" width="2" height="2" fill="#0000D2"/><rect x="217" y="675" width="2" height="2" fill="#0000D2"/><rect x="219" y="675" width="2" height="2" fill="#007FFF"/><rect x="221" y="675" width="2" height="2" fill="#00BFFF"/><rect x="293" y="675" width="2" height="2" fill="#0014AA"/><rect x="295" y="675" width="2" height="2" fill="#007FFF"/><rect x="305" y="675" width="2" height="2" fill="#007FFF"/><rect x="207" y="677" width="2" height="2" fill="#0000D2"/><rect x="209" y="677" width="2" height="2" fill="#00BFFF"/><rect x="217" y="677" width="2" height="2" fill="#0000D2"/><rect x="219" y="677" width="2" height="2" fill="#007FFF"/><rect x="221" y="677" width="2" height="2" fill="#0000D2"/><rect x="293" y="677" width="2" height="2" fill="#0000D2"/><rect x="297" y="677" width="2" height="2" fill="#007FFF"/><rect x="301" y="677" width="2" height="2" fill="#00BFFF"/><rect x="205" y="679" width="2" height="2" fill="#00BFFF"/><rect x="211" y="679" width="2" height="2" fill="#0000D2"/><rect x="215" y="679" width="2" height="2" fill="#007FFF"/><rect x="217" y="679" width="2" height="2" fill="#0000D2"/><rect x="219" y="679" width="2" height="2" fill="#007FFF"/><rect x="291" y="679" width="2" height="2" fill="#0014AA"/><rect x="293" y="679" width="2" height="2" fill="#00BFFF"/><rect x="297" y="679" width="2" height="2" fill="#00BFFF"/><rect x="299" y="679" width="2" height="2" fill="#00BFFF"/><rect x="301" y="679" width="2" height="2" fill="#00BFFF"/><rect x="207" y="681" width="2" height="2" fill="#00BFFF"/><rect x="211" y="681" width="2" height="2" fill="#00BFFF"/><rect x="213" y="681" width="2" height="2" fill="#0000D2"/><rect x="215" y="681" width="2" height="2" fill="#0000D2"/><rect x="293" y="681" width="2" height="2" fill="#0014AA"/><rect x="295" y="681" width="2" height="2" fill="#0000D2"/><rect x="303" y="681" width="2" height="2" fill="#007FFF"/><rect x="203" y="683" width="2" height="2" fill="#00BFFF"/><rect x="205" y="683" width="2" height="2" fill="#00BFFF"/><rect x="207" y="683" width="2" height="2" fill="#00BFFF"/><rect x="211" y="683" width="2" height="2" fill="#0000D2"/><rect x="215" y="683" width="2" height="2" fill="#007FFF"/><rect x="217" y="683" width="2" height="2" fill="#0014AA"/><rect x="219" y="683" width="2" height="2" fill="#007FFF"/><rect x="221" y="683" width="2" height="2" fill="#00BFFF"/><rect x="291" y="683" width="2" height="2" fill="#007FFF"/><rect x="205" y="685" width="2" height="2" fill="#00BFFF"/><rect x="211" y="685" width="2" height="2" fill="#0000D2"/><rect x="213" y="685" width="2" height="2" fill="#0000D2"/><rect x="215" y="685" width="2" height="2" fill="#00BFFF"/><rect x="217" y="685" width="2" height="2" fill="#0000D2"/><rect x="219" y="685" width="2" height="2" fill="#0000D2"/><rect x="221" y="685" width="2" height="2" fill="#0000D2"/><rect x="293" y="685" width="2" height="2" fill="#007FFF"/><rect x="209" y="687" width="2" height="2" fill="#007FFF"/><rect x="211" y="687" width="2" height="2" fill="#007FFF"/><rect x="213" y="687" width="2" height="2" fill="#00BFFF"/><rect x="221" y="687" width="2" height="2" fill="#0000D2"/><rect x="223" y="687" width="2" height="2" fill="#0000D2"/><rect x="293" y="687" width="2" height="2" fill="#007FFF"/><rect x="295" y="687" width="2" height="2" fill="#00BFFF"/><rect x="297" y="687" width="2" height="2" fill="#00BFFF"/><rect x="207" y="689" width="2" height="2" fill="#00BFFF"/><rect x="211" y="689" width="2" height="2" fill="#00BFFF"/><rect x="213" y="689" width="2" height="2" fill="#007FFF"/><rect x="217" y="689" width="2" height="2" fill="#00BFFF"/><rect x="219" y="689" width="2" height="2" fill="#007FFF"/><rect x="221" y="689" width="2" height="2" fill="#0000D2"/><rect x="223" y="689" width="2" height="2" fill="#0000D2"/><rect x="289" y="689" width="2" height="2" fill="#00BFFF"/><rect x="293" y="689" width="2" height="2" fill="#00BFFF"/><rect x="197" y="691" width="2" height="2" fill="#06AA10"/><rect x="213" y="691" width="2" height="2" fill="#0000D2"/><rect x="215" y="691" width="2" height="2" fill="#007FFF"/><rect x="217" y="691" width="2" height="2" fill="#007FFF"/><rect x="219" y="691" width="2" height="2" fill="#0000D2"/><rect x="221" y="691" width="2" height="2" fill="#0000D2"/><rect x="223" y="691" width="2" height="2" fill="#00BFFF"/><rect x="291" y="691" width="2" height="2" fill="#00BFFF"/><rect x="209" y="693" width="2" height="2" fill="#00BFFF"/><rect x="211" y="693" width="2" height="2" fill="#00BFFF"/><rect x="213" y="693" width="2" height="2" fill="#00BFFF"/><rect x="215" y="693" width="2" height="2" fill="#007FFF"/><rect x="217" y="693" width="2" height="2" fill="#007FFF"/><rect x="219" y="693" width="2" height="2" fill="#0000D2"/><rect x="225" y="693" width="2" height="2" fill="#007FFF"/><rect x="289" y="693" width="2" height="2" fill="#0000D2"/><rect x="297" y="693" width="2" height="2" fill="#00BFFF"/><rect x="207" y="695" width="2" height="2" fill="#00BFFF"/><rect x="209" y="695" width="2" height="2" fill="#06AA10"/><rect x="213" y="695" width="2" height="2" fill="#0000D2"/><rect x="215" y="695" width="2" height="2" fill="#00BFFF"/><rect x="217" y="695" width="2" height="2" fill="#007FFF"/><rect x="219" y="695" width="2" height="2" fill="#007FFF"/><rect x="223" y="695" width="2" height="2" fill="#007FFF"/><rect x="225" y="695" width="2" height="2" fill="#007FFF"/><rect x="313" y="695" width="2" height="2" fill="#00BFFF"/><rect x="217" y="697" width="2" height="2" fill="#0000D2"/><rect x="219" y="697" width="2" height="2" fill="#0000D2"/><rect x="223" y="697" width="2" height="2" fill="#0000D2"/><rect x="285" y="697" width="2" height="2" fill="#0000D2"/><rect x="217" y="699" width="2" height="2" fill="#007FFF"/><rect x="219" y="699" width="2" height="2" fill="#0000D2"/><rect x="221" y="699" width="2" height="2" fill="#007FFF"/><rect x="223" y="699" width="2" height="2" fill="#00BFFF"/><rect x="225" y="699" width="2" height="2" fill="#007FFF"/><rect x="227" y="699" width="2" height="2" fill="#007FFF"/><rect x="211" y="701" width="2" height="2" fill="#00BFFF"/><rect x="213" y="701" width="2" height="2" fill="#00BFFF"/><rect x="215" y="701" width="2" height="2" fill="#007FFF"/><rect x="217" y="701" width="2" height="2" fill="#06AA10"/><rect x="219" y="701" width="2" height="2" fill="#00BFFF"/><rect x="221" y="701" width="2" height="2" fill="#00BFFF"/><rect x="223" y="701" width="2" height="2" fill="#00BFFF"/><rect x="283" y="701" width="2" height="2" fill="#06AA10"/><rect x="217" y="703" width="2" height="2" fill="#007FFF"/><rect x="219" y="703" width="2" height="2" fill="#00BFFF"/><rect x="221" y="703" width="2" height="2" fill="#00BFFF"/><rect x="225" y="703" width="2" height="2" fill="#00BFFF"/><rect x="227" y="703" width="2" height="2" fill="#0000D2"/><rect x="231" y="703" width="2" height="2" fill="#0000D2"/><rect x="283" y="703" width="2" height="2" fill="#0000D2"/><rect x="217" y="705" width="2" height="2" fill="#00BFFF"/><rect x="221" y="705" width="2" height="2" fill="#0000D2"/><rect x="223" y="705" width="2" height="2" fill="#007FFF"/><rect x="229" y="705" width="2" height="2" fill="#007FFF"/><rect x="233" y="705" width="2" height="2" fill="#0000D2"/><rect x="283" y="705" width="2" height="2" fill="#007FFF"/><rect x="227" y="707" width="2" height="2" fill="#00BFFF"/><rect x="229" y="707" width="2" height="2" fill="#00FF00"/><rect x="231" y="707" width="2" height="2" fill="#00BFFF"/><rect x="233" y="707" width="2" height="2" fill="#0000D2"/><rect x="235" y="707" width="2" height="2" fill="#007FFF"/><rect x="281" y="707" width="2" height="2" fill="#00BFFF"/><rect x="221" y="709" width="2" height="2" fill="#00BFFF"/><rect x="223" y="709" width="2" height="2" fill="#007FFF"/><rect x="225" y="709" width="2" height="2" fill="#00BFFF"/><rect x="227" y="709" width="2" height="2" fill="#00BFFF"/><rect x="231" y="709" width="2" height="2" fill="#007FFF"/><rect x="239" y="709" width="2" height="2" fill="#0000D2"/><rect x="313" y="709" width="2" height="2" fill="#00BFFF"/><rect x="231" y="711" width="2" height="2" fill="#00BFFF"/><rect x="233" y="711" width="2" height="2" fill="#00BFFF"/><rect x="235" y="711" width="2" height="2" fill="#00BFFF"/><rect x="237" y="711" width="2" height="2" fill="#00BFFF"/><rect x="241" y="711" width="2" height="2" fill="#007FFF"/><rect x="273" y="711" width="2" height="2" fill="#007FFF"/><rect x="279" y="711" width="2" height="2" fill="#00BFFF"/><rect x="233" y="713" width="2" height="2" fill="#00BFFF"/><rect x="235" y="713" width="2" height="2" fill="#007FFF"/><rect x="237" y="713" width="2" height="2" fill="#00BFFF"/><rect x="239" y="713" width="2" height="2" fill="#007FFF"/><rect x="241" y="713" width="2" height="2" fill="#00BFFF"/><rect x="247" y="713" width="2" height="2" fill="#0000D2"/><rect x="249" y="713" width="2" height="2" fill="#0000D2"/><rect x="269" y="713" width="2" height="2" fill="#0000D2"/><rect x="231" y="715" width="2" height="2" fill="#007FFF"/><rect x="239" y="715" width="2" height="2" fill="#00BFFF"/><rect x="243" y="715" width="2" height="2" fill="#007FFF"/><rect x="251" y="715" width="2" height="2" fill="#007FFF"/><rect x="255" y="715" width="2" height="2" fill="#00FF00"/><rect x="263" y="715" width="2" height="2" fill="#007FFF"/><rect x="283" y="715" width="2" height="2" fill="#00BFFF"/><rect x="241" y="717" width="2" height="2" fill="#00BFFF"/><rect x="247" y="717" width="2" height="2" fill="#007FFF"/><rect x="251" y="717" width="2" height="2" fill="#007FFF"/><rect x="253" y="717" width="2" height="2" fill="#007FFF"/><rect x="255" y="717" width="2" height="2" fill="#00BFFF"/><rect x="243" y="719" width="2" height="2" fill="#00BFFF"/><rect x="289" y="721" width="2" height="2" fill="#00BFFF"/><rect x="243" y="727" width="2" height="2" fill="#007FFF"/><rect x="299" y="731" width="2" height="2" fill="#00BFFF"/><rect x="261" y="733" width="2" height="2" fill="#00BFFF"/><rect x="183" y="735" width="2" height="2" fill="#00BFFF"/><rect x="249" y="735" width="2" height="2" fill="#00BFFF"/><rect x="283" y="737" width="2" height="2" fill="#00BFFF"/><path d="M196.7 630.3 L236.6 664.4" stroke="#fff" stroke-width="2" shape-rendering="auto"/><rect x="105" y="499" width="11" height="1" fill="#FFFF00"/><rect x="110" y="494" width="1" height="11" fill="#FFFF00"/><rect x="105" y="588" width="11" height="1" fill="#FFFF00"/><rect x="110" y="583" width="1" height="11" fill="#FFFF00"/><rect x="105" y="677" width="11" height="1" fill="#FFFF00"/><rect x="110" y="672" width="1" height="11" fill="#FFFF00"/><rect x="105" y="766" width="11" height="1" fill="#FFFF00"/><rect x="110" y="761" width="1" height="11" fill="#FFFF00"/><rect x="105" y="855" width="11" height="1" fill="#FFFF00"/><rect x="110" y="850" width="1" height="11" fill="#FFFF00"/><rect x="194" y="499" width="11" height="1" fill="#FFFF00"/><rect x="199" y="494" width="1" height="11" fill="#FFFF00"/><rect x="194" y="588" width="11" height="1" fill="#FFFF00"/><rect x="199" y="583" width="1" height="11" fill="#FFFF00"/><rect x="194" y="677" width="11" height="1" fill="#FFFF00"/><rect x="199" y="672" width="1" height="11" fill="#FFFF00"/><rect x="194" y="766" width="11" height="1" fill="#FFFF00"/><rect x="199" y="761" width="1" height="11" fill="#FFFF00"/><rect x="194" y="855" width="11" height="1" fill="#FFFF00"/><rect x="199" y="850" width="1" height="11" fill="#FFFF00"/><rect x="283" y="499" width="11" height="1" fill="#FFFF00"/><rect x="288" y="494" width="1" height="11" fill="#FFFF00"/><rect x="283" y="588" width="11" height="1" fill="#FFFF00"/><rect x="288" y="583" width="1" height="11" fill="#FFFF00"/><rect x="283" y="677" width="11" height="1" fill="#FFFF00"/><rect x="288" y="672" width="1" height="11" fill="#FFFF00"/><rect x="283" y="766" width="11" height="1" fill="#FFFF00"/><rect x="288" y="761" width="1" height="11" fill="#FFFF00"/><rect x="283" y="855" width="11" height="1" fill="#FFFF00"/><rect x="288" y="850" width="1" height="11" fill="#FFFF00"/><rect x="372" y="499" width="11" height="1" fill="#FFFF00"/><rect x="377" y="494" width="1" height="11" fill="#FFFF00"/><rect x="372" y="588" width="11" height="1" fill="#FFFF00"/><rect x="377" y="583" width="1" height="11" fill="#FFFF00"/><rect x="372" y="677" width="11" height="1" fill="#FFFF00"/><rect x="377" y="672" width="1" height="11" fill="#FFFF00"/><rect x="372" y="766" width="11" height="1" fill="#FFFF00"/><rect x="377" y="761" width="1" height="11" fill="#FFFF00"/><rect x="372" y="855" width="11" height="1" fill="#FFFF00"/><rect x="377" y="850" width="1" height="11" fill="#FFFF00"/><rect x="461" y="499" width="11" height="1" fill="#FFFF00"/><rect x="466" y="494" width="1" height="11" fill="#FFFF00"/><rect x="461" y="588" width="11" height="1" fill="#FFFF00"/><rect x="466" y="583" width="1" height="11" fill="#FFFF00"/><rect x="461" y="677" width="11" height="1" fill="#FFFF00"/><rect x="466" y="672" width="1" height="11" fill="#FFFF00"/><rect x="461" y="766" width="11" height="1" fill="#FFFF00"/><rect x="466" y="761" width="1" height="11" fill="#FFFF00"/><rect x="461" y="855" width="11" height="1" fill="#FFFF00"/><rect x="466" y="850" width="1" height="11" fill="#FFFF00"/><rect x="505" y="476" width="85" height="1" fill="#999"/><rect x="505" y="902" width="85" height="1" fill="#999"/><rect x="507" y="493" width="10" height="15" fill="#FF0000"/><rect x="507" y="508" width="10" height="15" fill="#D20000"/><rect x="507" y="523" width="10" height="15" fill="#8B0000"/><rect x="507" y="538" width="10" height="15" fill="#E05000"/><rect x="507" y="553" width="10" height="15" fill="#FF7F00"/><rect x="507" y="568" width="10" height="15" fill="#FF5A5A"/><rect x="507" y="583" width="10" height="15" fill="#FF8C8C"/><rect x="507" y="598" width="10" height="15" fill="#FFC0C0"/><rect x="507" y="613" width="10" height="15" fill="#FFFF00"/><rect x="507" y="628" width="10" height="15" fill="#FFB428"/><rect x="507" y="643" width="10" height="15" fill="#D9935E"/><rect x="507" y="658" width="10" height="15" fill="#A0440A"/><rect x="507" y="673" width="10" height="15" fill="#B4B4B4"/><rect x="507" y="688" width="10" height="15" fill="#064F14"/><rect x="507" y="703" width="10" height="15" fill="#078A10"/><rect x="507" y="718" width="10" height="15" fill="#06AA10"/><rect x="507" y="733" width="10" height="15" fill="#00FF00"/><rect x="507" y="748" width="10" height="15" fill="#00BFFF"/><rect x="507" y="763" width="10" height="15" fill="#007FFF"/><rect x="507" y="778" width="10" height="15" fill="#0000D2"/><rect x="507" y="793" width="10" height="15" fill="#0014AA"/><rect x="507" y="808" width="10" height="15" fill="#00008C"/><rect x="507" y="823" width="10" height="15" fill="#9090B8"/><rect x="507" y="838" width="10" height="15" fill="#5A5A82"/><rect x="507" y="853" width="10" height="15" fill="#707070"/><g transform="translate(23 903)"><rect x="0" y="0" width="46" height="48" fill="#A0A0A0"/><rect x="1" y="1" width="44" height="46" fill="#191970"/><path shape-rendering="auto" d="M6.9 12.6 C10 8.2 17 6.6 22.5 9.6 S32 13.2 37.6 9.4 C36 15 27.5 17.5 22.5 21 C17 25 12 33 6.4 39.6 C12 36 20 35.6 26 39.6 S36 40.6 38.8 35.4" fill="none" stroke="#FFFF00" stroke-width="1.8" stroke-linejoin="miter"/></g><g transform="translate(70 903)"><rect x="0" y="0" width="46" height="48" fill="#A0A0A0"/><rect x="1" y="1" width="44" height="46" fill="#696969"/><text x="3" y="15" font-size="15" font-weight="bold" textLength="30" lengthAdjust="spacingAndGlyphs" fill="#E6E6E6" font-family="Liberation Mono, monospace">GOES</text><path d="M3 45 V18 A24 27 0 0 1 25 45 Z" fill="url(#ckg)"/><path d="M3 18 h5 l-3 5 h-2z M14 24 l5 -3 l5 9 l1 8 l-6 -3 l-5 -6z M3 40 l5 -3 l5 2 v6 h-10z M4 29 l3 3 l-3 2z" fill="#E6E6E6"/><path d="M40.5 18 l3 3 l-3 3 l-3 -3z" fill="#E6E6E6"/><path d="M22.5 24.5 L37 22.5 M24.5 31.5 L38.5 23.5" stroke="#E6E6E6" stroke-width="1" stroke-dasharray="1 1.2"/><rect x="19" y="17" width="1" height="1" fill="#E6E6E6"/><rect x="24" y="20" width="1" height="1" fill="#E6E6E6"/><rect x="31" y="20" width="1" height="1" fill="#E6E6E6"/><rect x="35" y="32" width="1" height="1" fill="#E6E6E6"/><rect x="39" y="30" width="1" height="1" fill="#E6E6E6"/><rect x="25" y="42" width="1" height="1" fill="#E6E6E6"/><text x="29" y="43" font-size="11" fill="#E6E6E6" textLength="10" lengthAdjust="spacingAndGlyphs">IR</text></g><g transform="translate(117 903)"><rect x="0" y="0" width="46" height="48" fill="#A0A0A0"/><rect x="1" y="1" width="44" height="46" fill="#696969"/><path shape-rendering="auto" d="M5.2 9.5 Q9 27 27.5 31" fill="none" stroke="#E6E6E6" stroke-width="2" stroke-linecap="round"/><path d="M13 25 h3 l.5 10 h-7z M9 35 h7.5 v5 h-7.5z" fill="#E6E6E6"/><rect x="12.5" y="20.5" width="4" height="4" fill="none" stroke="#E6E6E6"/><text x="36" y="16" font-size="12.5" text-anchor="middle" fill="#E6E6E6" textLength="6" lengthAdjust="spacingAndGlyphs">S</text><text x="36" y="28" font-size="12.5" text-anchor="middle" fill="#E6E6E6" textLength="6" lengthAdjust="spacingAndGlyphs">U</text><text x="36" y="40" font-size="12.5" text-anchor="middle" fill="#E6E6E6" textLength="6" lengthAdjust="spacingAndGlyphs">R</text></g><g transform="translate(164 903)"><rect x="0" y="0" width="21" height="48" fill="#A0A0A0"/><rect x="1" y="1" width="19" height="46" fill="#191970"/><path d="M3 5 l3.5 1 l-2 2.5 l-.5 3.5 l-1 -1z M3.5 13.5 l2.5 -1 v2.5z M9 5 l2.5 .5 l1.5 2 l1.5 -2.5 l1 0 l-1 3 l-1.5 1 l1.5 1.5 l1.5 .5 l-.5 2 l-2 2 l-.5 -3.5 l-2 -2 l-.5 -3z M16 4.5 l2.5 -1 l-1.5 2.5z" fill="#FFFF00"/><text x="10.2" y="24.8" font-size="9.5" text-anchor="middle" fill="#FFFF00">M</text><text x="10.2" y="32.8" font-size="9.5" text-anchor="middle" fill="#FFFF00">A</text><text x="10.2" y="41" font-size="9.5" text-anchor="middle" fill="#FFFF00">P</text></g><g transform="translate(186 927)"><rect x="0" y="0" width="22" height="24" fill="#A0A0A0"/><rect x="1" y="1" width="20" height="22" fill="#696969"/><circle shape-rendering="auto" cx="11.5" cy="11.5" r="7.2" fill="none" stroke="#E6E6E6" stroke-width="1.1"/></g><g transform="translate(209 903)"><rect x="0" y="0" width="46" height="48" fill="#A0A0A0"/><rect x="1" y="1" width="44" height="46" fill="#696969"/><path shape-rendering="auto" d="M5.7 32.5 H40 L37 38.5 M5.7 32.5 Q5.5 36.5 9.5 38.5 M8.5 32.5 V24.5 H12.2 L15.5 32.5 M21.5 32.5 V27 M23.5 32.5 V27 M34.5 32.5 V16" fill="none" stroke="#E6E6E6" stroke-width="1"/><circle shape-rendering="auto" cx="22.5" cy="23.5" r="3.2" fill="none" stroke="#E6E6E6"/><path shape-rendering="auto" d="M3 44 V37.3 q2.85 6.4 5.7 0 q2.85 6.4 5.7 0 q2.85 6.4 5.7 0 q2.85 6.4 5.7 0 q2.85 6.4 5.7 0 q2.85 6.4 5.7 0 q2.85 6.4 5.7 0 V44z" fill="#E6E6E6"/></g><g transform="translate(256 903)"><rect x="0" y="0" width="46" height="48" fill="#A0A0A0"/><rect x="1" y="1" width="44" height="46" fill="#191970"/><rect x="5" y="5" width="1" height="39" fill="#FFFF00"/><rect x="5" y="5" width="37" height="1" fill="#FFFF00"/><rect x="14" y="5" width="1" height="39" fill="#FFFF00"/><rect x="5" y="14" width="37" height="1" fill="#FFFF00"/><rect x="23" y="5" width="1" height="39" fill="#FFFF00"/><rect x="5" y="24" width="37" height="1" fill="#FFFF00"/><rect x="32" y="5" width="1" height="39" fill="#FFFF00"/><rect x="5" y="34" width="37" height="1" fill="#FFFF00"/><rect x="41" y="5" width="1" height="39" fill="#FFFF00"/><rect x="5" y="43" width="37" height="1" fill="#FFFF00"/><path shape-rendering="auto" d="M12.8 9.5 Q17 26 34.5 31" fill="none" stroke="#FFFF00" stroke-width="2.2" stroke-linecap="round"/><path d="M19 23 h3.5 l.5 17 h-7 v-4 h1.5z" fill="#FFFF00"/></g><g transform="translate(303 903)"><rect x="0" y="0" width="14" height="48" fill="#A0A0A0"/><rect x="1" y="1" width="12" height="46" fill="#191970"/><text x="7.2" y="11.2" font-size="7.2" text-anchor="middle" fill="#FFFF00">B</text><text x="7.2" y="17.2" font-size="7.2" text-anchor="middle" fill="#FFFF00">O</text><text x="7.2" y="23.2" font-size="7.2" text-anchor="middle" fill="#FFFF00">U</text><text x="7.2" y="29.2" font-size="7.2" text-anchor="middle" fill="#FFFF00">N</text><text x="7.2" y="35.2" font-size="7.2" text-anchor="middle" fill="#FFFF00">D</text><text x="7.2" y="41.2" font-size="7.2" text-anchor="middle" fill="#FFFF00">S</text></g><g transform="translate(318 903)"><rect x="0" y="0" width="21" height="48" fill="#A0A0A0"/><rect x="1" y="1" width="19" height="46" fill="#696969"/><clipPath id="pc2"><rect x="3" y="10" width="15.2" height="28"/></clipPath><g shape-rendering="auto" clip-path="url(#pc2)" fill="none" stroke="#E6E6E6" stroke-width="1.2"><circle cx="10.4" cy="23.5" r="9.2"/><circle cx="10.4" cy="23.5" r="5.4"/><path d="M10.4 20.9 v-7 M10.4 26.1 v7 M7.8 23.5 h-6 M13 23.5 h6"/><path d="M8.4 21.5 l-5 -5 M12.4 21.5 l5 -5 M8.4 25.5 l-5 5 M12.4 25.5 l5 5" stroke-width="1"/><circle cx="10.4" cy="23.5" r="2.6"/></g></g><g transform="translate(340 927)"><rect x="0" y="0" width="22" height="24" fill="#A0A0A0"/><rect x="1" y="1" width="20" height="22" fill="#191970"/><rect x="3" y="4" width="1" height="16" fill="#FFFF00"/><rect x="3" y="4" width="16" height="1" fill="#FFFF00"/><rect x="8" y="4" width="1" height="16" fill="#FFFF00"/><rect x="3" y="9" width="16" height="1" fill="#FFFF00"/><rect x="13" y="4" width="1" height="16" fill="#FFFF00"/><rect x="3" y="14" width="16" height="1" fill="#FFFF00"/><rect x="18" y="4" width="1" height="16" fill="#FFFF00"/><rect x="3" y="19" width="16" height="1" fill="#FFFF00"/></g></svg>
<div class="t  k" style="left:12.1px;top:4.68px;font-size:24px;color:#FFFF00;letter-spacing:-0.156px;">5<span class="hy" style="width:0.52em;transform:scaleX(1.9)">-</span>sep<span class="hy" style="width:0.52em;transform:scaleX(1.9)">-</span>1997,19:21:00</div>
<div class="t  k" style="left:254.25px;top:4.68px;font-size:24px;color:#fff;letter-spacing:-0.200px;">maxdz plot.</div>
<div class="t  k" style="right:529px;top:63.61px;font-size:17px;color:#FFFF00;">20.0</div>
<div class="t  k" style="right:529px;top:152.61px;font-size:17px;color:#FFFF00;">10.0</div>
<div class="t  k" style="right:529px;top:241.61px;font-size:17px;color:#FFFF00;">0.0</div>
<div class="t  k" style="right:529px;top:330.61px;font-size:17px;color:#FFFF00;"><span class="hy" style="width:0.72em;transform:scaleX(1.9)">-</span>10.0</div>
<div class="t  k" style="right:529px;top:419.61px;font-size:17px;color:#FFFF00;"><span class="hy" style="width:0.72em;transform:scaleX(1.9)">-</span>20.0</div>
<div class="t  k" style="left:93px;transform:translateX(-50%);top:457.11px;font-size:17px;color:#FFFF00;"><span class="hy" style="width:0.68em;transform:scaleX(1.9)">-</span>20.0</div>
<div class="t  k" style="left:182px;transform:translateX(-50%);top:457.11px;font-size:17px;color:#FFFF00;"><span class="hy" style="width:0.68em;transform:scaleX(1.9)">-</span>10.0</div>
<div class="t  k" style="left:271px;transform:translateX(-50%);top:457.11px;font-size:17px;color:#FFFF00;">0.0</div>
<div class="t  k" style="left:360px;transform:translateX(-50%);top:457.11px;font-size:17px;color:#FFFF00;">10.0</div>
<div class="t  k" style="left:449px;transform:translateX(-50%);top:457.11px;font-size:17px;color:#FFFF00;">20.0</div>
<div class="t  k" style="left:381.4px;top:494.68px;font-size:24px;color:#fff;letter-spacing:-0.160px;">Alt: 1.00 km MSL</div>
<div class="t b" style="left:490px;top:49.88px;font-size:9px;color:#fff;"><span class="nw" style="transform:scaleX(.7)">maxdz</span></div>
<div class="t " style="left:505px;top:62.10px;font-size:8.5px;color:#fff;"><span class="nw" style="transform:scaleX(.82)">31.2</span></div>
<div class="t " style="left:505px;top:77.10px;font-size:8.5px;color:#fff;"><span class="nw" style="transform:scaleX(.82)">28.8</span></div>
<div class="t " style="left:505px;top:92.10px;font-size:8.5px;color:#fff;"><span class="nw" style="transform:scaleX(.82)">26.2</span></div>
<div class="t " style="left:505px;top:107.10px;font-size:8.5px;color:#fff;"><span class="nw" style="transform:scaleX(.82)">23.8</span></div>
<div class="t " style="left:505px;top:122.10px;font-size:8.5px;color:#fff;"><span class="nw" style="transform:scaleX(.82)">21.2</span></div>
<div class="t " style="left:505px;top:137.10px;font-size:8.5px;color:#fff;"><span class="nw" style="transform:scaleX(.82)">18.8</span></div>
<div class="t " style="left:505px;top:152.10px;font-size:8.5px;color:#fff;"><span class="nw" style="transform:scaleX(.82)">16.2</span></div>
<div class="t " style="left:505px;top:167.10px;font-size:8.5px;color:#fff;"><span class="nw" style="transform:scaleX(.82)">13.8</span></div>
<div class="t " style="left:505px;top:182.10px;font-size:8.5px;color:#fff;"><span class="nw" style="transform:scaleX(.82)">11.2</span></div>
<div class="t " style="left:505px;top:197.10px;font-size:8.5px;color:#fff;"><span class="nw" style="transform:scaleX(.82)">8.8</span></div>
<div class="t " style="left:505px;top:212.10px;font-size:8.5px;color:#fff;"><span class="nw" style="transform:scaleX(.82)">6.2</span></div>
<div class="t " style="left:505px;top:227.10px;font-size:8.5px;color:#fff;"><span class="nw" style="transform:scaleX(.82)">3.8</span></div>
<div class="t " style="left:505px;top:242.10px;font-size:8.5px;color:#fff;"><span class="nw" style="transform:scaleX(.82)">1.2</span></div>
<div class="t " style="left:505px;top:257.10px;font-size:8.5px;color:#fff;"><span class="nw" style="transform:scaleX(.82)">-1.2</span></div>
<div class="t " style="left:505px;top:272.10px;font-size:8.5px;color:#fff;"><span class="nw" style="transform:scaleX(.82)">-3.8</span></div>
<div class="t " style="left:505px;top:287.10px;font-size:8.5px;color:#fff;"><span class="nw" style="transform:scaleX(.82)">-6.2</span></div>
<div class="t " style="left:505px;top:302.10px;font-size:8.5px;color:#fff;"><span class="nw" style="transform:scaleX(.82)">-8.8</span></div>
<div class="t " style="left:505px;top:317.10px;font-size:8.5px;color:#fff;"><span class="nw" style="transform:scaleX(.82)">-11.2</span></div>
<div class="t " style="left:505px;top:332.10px;font-size:8.5px;color:#fff;"><span class="nw" style="transform:scaleX(.82)">-13.8</span></div>
<div class="t " style="left:505px;top:347.10px;font-size:8.5px;color:#fff;"><span class="nw" style="transform:scaleX(.82)">-16.2</span></div>
<div class="t " style="left:505px;top:362.10px;font-size:8.5px;color:#fff;"><span class="nw" style="transform:scaleX(.82)">-18.8</span></div>
<div class="t " style="left:505px;top:377.10px;font-size:8.5px;color:#fff;"><span class="nw" style="transform:scaleX(.82)">-21.2</span></div>
<div class="t " style="left:505px;top:392.10px;font-size:8.5px;color:#fff;"><span class="nw" style="transform:scaleX(.82)">-23.8</span></div>
<div class="t " style="left:505px;top:407.10px;font-size:8.5px;color:#fff;"><span class="nw" style="transform:scaleX(.82)">-26.2</span></div>
<div class="t " style="left:505px;top:422.10px;font-size:8.5px;color:#fff;"><span class="nw" style="transform:scaleX(.82)">-28.8</span></div>
<div class="t " style="left:505px;top:437.10px;font-size:8.5px;color:#fff;"><span class="nw" style="transform:scaleX(.82)">-31.2</span></div>
</div>
<div class="dot" style="left:17px;top:408px;width:154px;height:21px;overflow:hidden;">
<div style="left:1px;top:1px;width:152px;height:19px;background:#006400;"></div>
<div class="t  b" style="left:45px;top:3.84px;font-size:12px;color:#E4E0E4;"><span class="nw" style="transform:scaleX(0.9316)">big2</span></div>
<svg width="154" height="21" viewBox="17 408 154 21" shape-rendering="crispEdges"><rect x="20.5" y="411.5" width="14" height="14" fill="#006400" stroke="#E4E0E4"/><circle cx="27.5" cy="418.5" r="4.6" fill="#E4E0E4" shape-rendering="auto"/><rect x="39.5" y="411.5" width="14" height="14" fill="#006400" stroke="#E4E0E4"/><path d="M42.5 413.5 h7 v9 h-7 z" fill="none" stroke="#E4E0E4"/><path d="M49.5 414.5 h2 v10 h-7 v-2" fill="none" stroke="#E4E0E4" stroke-width="1"/><rect x="44" y="423" width="6" height="2" fill="#E4E0E4"/><rect x="50" y="415" width="2" height="9" fill="#E4E0E4"/><rect x="45" y="416" width="3" height="1" fill="#E4E0E4"/><rect x="45" y="418" width="3" height="1" fill="#E4E0E4"/><rect x="45" y="420" width="3" height="1" fill="#E4E0E4"/><rect x="153.5" y="411.5" width="14" height="14" fill="#006400" stroke="#E4E0E4"/><path d="M158.5 411.5 v4 h-5 M162.5 411.5 v9 h-9" fill="none" stroke="#E4E0E4"/><rect x="134.5" y="411.5" width="14" height="14" fill="#006400" stroke="#E4E0E4"/><circle cx="141.5" cy="418.5" r="2" fill="none" stroke="#E4E0E4" stroke-width="1.3" shape-rendering="auto"/></svg>
</div>
<div class="dot" style="left:594px;top:410px;width:169px;height:21px;overflow:hidden;">
<div style="left:1px;top:1px;width:167px;height:19px;background:#006400;"></div>
<div class="t  b" style="left:45px;top:3.84px;font-size:12px;color:#E4E0E4;"><span class="nw" style="transform:scaleX(1.0329)">xsectb</span></div>
<svg width="169" height="21" viewBox="594 410 169 21" shape-rendering="crispEdges"><rect x="597.5" y="413.5" width="14" height="14" fill="#006400" stroke="#E4E0E4"/><circle cx="604.5" cy="420.5" r="4.6" fill="#E4E0E4" shape-rendering="auto"/><rect x="616.5" y="413.5" width="14" height="14" fill="#006400" stroke="#E4E0E4"/><path d="M619.5 415.5 h7 v9 h-7 z" fill="none" stroke="#E4E0E4"/><path d="M626.5 416.5 h2 v10 h-7 v-2" fill="none" stroke="#E4E0E4" stroke-width="1"/><rect x="621" y="425" width="6" height="2" fill="#E4E0E4"/><rect x="627" y="417" width="2" height="9" fill="#E4E0E4"/><rect x="622" y="418" width="3" height="1" fill="#E4E0E4"/><rect x="622" y="420" width="3" height="1" fill="#E4E0E4"/><rect x="622" y="422" width="3" height="1" fill="#E4E0E4"/><rect x="745.5" y="413.5" width="14" height="14" fill="#006400" stroke="#E4E0E4"/><path d="M750.5 413.5 v4 h-5 M754.5 413.5 v9 h-9" fill="none" stroke="#E4E0E4"/><rect x="726.5" y="413.5" width="14" height="14" fill="#006400" stroke="#E4E0E4"/><circle cx="733.5" cy="420.5" r="2" fill="none" stroke="#E4E0E4" stroke-width="1.3" shape-rendering="auto"/></svg>
</div>
<div class="dot" style="left:594px;top:430px;width:562px;height:385px;overflow:hidden;">
<div style="left:1px;top:1px;width:560px;height:383px;background:#000;"></div>
<svg width="562" height="385" viewBox="594 430 562 385" shape-rendering="crispEdges"><clipPath id="clipxsectb"><path d="M667 716 L667 676 L669 676 L675 672 L675 653 L741 653 L744 650 L744 630 L765 630 L765 653 L817 653 L817 630 L830 630 L830 653 L864 653 L864 630 L882 630 L882 699 L938 699 L938 716Z"/><path d="M942 676 L968 676 L968 699 L994 699 L994 716 L959.5 716 L959.5 692.5 L942 692.5Z"/><path d="M1006 699 L1024 699 L1024 716 L1006 716Z"/></clipPath><g clip-path="url(#clipxsectb)"><rect x="640" y="607" width="400" height="120" fill="#06AA10"/><path d="M667 676 L675 672.8 L675 653 L680 653 L680.5 668.1 L678.1 676 L671.9 682.2 L668.8 693.1 L669.5 708.8 L675 716 L667 716Z" fill="#078A10"/><path d="M734.4 653 L740.6 653 L743.8 649.4 L744.5 641.6 L750 640.8 L759.4 643.9 L765 647.8 L765 654 L756.2 661.9 L748.4 665.8 L743 671.2 L739 671.6 L736 668.9 L735.2 661.9Z" fill="#078A10"/><path d="M791.4 653 L800 663.4 L806.2 674.4 L813.3 680.6 L817.2 679.8 L823.4 674.4 L829.7 666.6 L837.5 663.4 L845.3 658.8 L852 656 L860 660 L868 667 L875 668 L872 660 L866 653 L864 653 L864 630 L872 630 L873 653 L830 653 L830 630 L817 630 L817 648 L813 653Z" fill="#078A10"/><path d="M820 636 L824 637.5 L824.5 645 L822.5 650 L823.5 658 L819 659.5 L813.5 655.5 L817 651.5 L819.5 645Z" fill="#06AA10"/><path d="M845 695 L850 680 L860 672.5 L872.5 670 L882 675 L882 699.2 L875 699.2 L867.5 710 L857.5 715.5 L850 707.5 L845 700Z" fill="#078A10"/><path d="M715 716 L718.8 710 L725 711.2 L728.8 716Z" fill="#078A10"/><path d="M810 716 L820 710 L830 707.5 L837.5 710 L842.5 716Z" fill="#078A10"/><path d="M743.8 716 L752.5 711.2 L765 710 L771.2 712.5 L774.5 716Z" fill="#00FF00"/><path d="M903.8 700 L915 699 L930 701 L937.5 705 L938 716 L903 716 L901 708Z" fill="#078A10"/><path d="M950 684 L955 681.5 L962 682 L968 686 L968 716 L959.5 716 L959.5 692.5 L952 690Z" fill="#00FF00"/><path d="M973.8 716 L975 705 L980 699.2 L987 699.2 L990 706 L991.2 716Z" fill="#078A10"/><path d="M1011 699 L1021 699 L1020 708 L1017 716 L1011 716Z" fill="#00FF00"/><path d="M1024 702.5 L1024 716 L1017.5 716 L1020 708.8Z" fill="#00BFFF"/></g><rect x="645" y="457" width="427" height="1" fill="#fff"/><rect x="645" y="739" width="427" height="1" fill="#fff"/><rect x="645" y="457" width="1" height="283" fill="#fff"/><rect x="1071" y="457" width="1" height="283" fill="#fff"/><rect x="645" y="716" width="12" height="1" fill="#fff"/><rect x="1060" y="716" width="12" height="1" fill="#fff"/><rect x="645" y="694" width="12" height="1" fill="#fff"/><rect x="1060" y="694" width="12" height="1" fill="#fff"/><rect x="645" y="671" width="12" height="1" fill="#fff"/><rect x="1060" y="671" width="12" height="1" fill="#fff"/><rect x="645" y="649" width="12" height="1" fill="#fff"/><rect x="1060" y="649" width="12" height="1" fill="#fff"/><rect x="645" y="626" width="12" height="1" fill="#fff"/><rect x="1060" y="626" width="12" height="1" fill="#fff"/><rect x="645" y="604" width="12" height="1" fill="#fff"/><rect x="1060" y="604" width="12" height="1" fill="#fff"/><rect x="645" y="581" width="12" height="1" fill="#fff"/><rect x="1060" y="581" width="12" height="1" fill="#fff"/><rect x="645" y="559" width="12" height="1" fill="#fff"/><rect x="1060" y="559" width="12" height="1" fill="#fff"/><rect x="645" y="536" width="12" height="1" fill="#fff"/><rect x="1060" y="536" width="12" height="1" fill="#fff"/><rect x="645" y="513" width="12" height="1" fill="#fff"/><rect x="1060" y="513" width="12" height="1" fill="#fff"/><rect x="645" y="491" width="12" height="1" fill="#fff"/><rect x="1060" y="491" width="12" height="1" fill="#fff"/><rect x="645" y="468" width="12" height="1" fill="#fff"/><rect x="1060" y="468" width="12" height="1" fill="#fff"/><rect x="698" y="732" width="1" height="7" fill="#fff"/><rect x="698" y="457" width="1" height="7" fill="#fff"/><rect x="752" y="732" width="1" height="7" fill="#fff"/><rect x="752" y="457" width="1" height="7" fill="#fff"/><rect x="805" y="732" width="1" height="7" fill="#fff"/><rect x="805" y="457" width="1" height="7" fill="#fff"/><rect x="858" y="732" width="1" height="7" fill="#fff"/><rect x="858" y="457" width="1" height="7" fill="#fff"/><rect x="911" y="732" width="1" height="7" fill="#fff"/><rect x="911" y="457" width="1" height="7" fill="#fff"/><rect x="964" y="732" width="1" height="7" fill="#fff"/><rect x="964" y="457" width="1" height="7" fill="#fff"/><rect x="1018" y="732" width="1" height="7" fill="#fff"/><rect x="1018" y="457" width="1" height="7" fill="#fff"/><rect x="1072" y="457" width="83" height="307" fill="#000"/><rect x="1073" y="480" width="10" height="11" fill="#FF0000"/><rect x="1073" y="491" width="10" height="11" fill="#D20000"/><rect x="1073" y="502" width="10" height="11" fill="#8B0000"/><rect x="1073" y="513" width="10" height="11" fill="#E05000"/><rect x="1073" y="524" width="10" height="11" fill="#FF7F00"/><rect x="1073" y="535" width="10" height="11" fill="#FF5A5A"/><rect x="1073" y="546" width="10" height="11" fill="#FF8C8C"/><rect x="1073" y="557" width="10" height="11" fill="#FFC0C0"/><rect x="1073" y="568" width="10" height="11" fill="#FFFF00"/><rect x="1073" y="579" width="10" height="11" fill="#FFB428"/><rect x="1073" y="590" width="10" height="11" fill="#D9935E"/><rect x="1073" y="601" width="10" height="11" fill="#A0440A"/><rect x="1073" y="612" width="10" height="11" fill="#B4B4B4"/><rect x="1073" y="623" width="10" height="11" fill="#064F14"/><rect x="1073" y="634" width="10" height="11" fill="#078A10"/><rect x="1073" y="645" width="10" height="11" fill="#06AA10"/><rect x="1073" y="656" width="10" height="11" fill="#00FF00"/><rect x="1073" y="667" width="10" height="11" fill="#00BFFF"/><rect x="1073" y="678" width="10" height="11" fill="#007FFF"/><rect x="1073" y="689" width="10" height="11" fill="#0000D2"/><rect x="1073" y="700" width="10" height="11" fill="#0014AA"/><rect x="1073" y="711" width="10" height="11" fill="#00008C"/><rect x="1073" y="722" width="10" height="11" fill="#9090B8"/><rect x="1073" y="733" width="10" height="11" fill="#5A5A82"/><rect x="1073" y="744" width="10" height="11" fill="#707070"/><rect x="1071" y="456" width="84" height="1" fill="#999"/><rect x="1071" y="764" width="84" height="1" fill="#999"/><g transform="translate(600 764)"><rect x="0" y="0" width="46" height="48" fill="#A0A0A0"/><rect x="1" y="1" width="44" height="46" fill="#191970"/><path shape-rendering="auto" d="M6.9 12.6 C10 8.2 17 6.6 22.5 9.6 S32 13.2 37.6 9.4 C36 15 27.5 17.5 22.5 21 C17 25 12 33 6.4 39.6 C12 36 20 35.6 26 39.6 S36 40.6 38.8 35.4" fill="none" stroke="#FFFF00" stroke-width="1.8" stroke-linejoin="miter"/></g><g transform="translate(647 764)"><rect x="0" y="0" width="46" height="48" fill="#A0A0A0"/><rect x="1" y="1" width="44" height="46" fill="#696969"/><text x="23" y="8.8" font-size="6.6" font-weight="bold" text-anchor="middle" fill="#E6E6E6">CROSS</text><text x="23" y="44.3" font-size="6.8" font-weight="bold" text-anchor="middle" fill="#E6E6E6">SECTION</text><rect x="13.5" y="12.5" width="21" height="21" fill="url(#ckg)"/><g fill="none" stroke="#E6E6E6" stroke-width="1"><rect x="4.5" y="17.5" width="21" height="20"/><path d="M20.5 10.5 H40.5 V30.5"/><path shape-rendering="auto" d="M4.5 17.5 L20.5 10.5 M25.5 17.5 L40.5 10.5 M25.5 37.5 L40.5 30.5"/><path shape-rendering="auto" d="M4.5 37.5 L20.5 30.5" stroke-dasharray="1 1.5"/></g></g><g transform="translate(694 764)"><rect x="0" y="0" width="46" height="48" fill="#A0A0A0"/><rect x="1" y="1" width="44" height="46" fill="#696969"/><text x="23" y="8.8" font-size="6.6" font-weight="bold" text-anchor="middle" fill="#E6E6E6">CROSS</text><text x="23" y="44.3" font-size="6.8" font-weight="bold" text-anchor="middle" fill="#E6E6E6">SECTION</text><rect x="13.5" y="12.5" width="21" height="21" fill="url(#ckg)"/><g fill="none" stroke="#E6E6E6" stroke-width="1"><rect x="4.5" y="17.5" width="21" height="20"/><path d="M20.5 10.5 H40.5 V30.5"/><path shape-rendering="auto" d="M4.5 17.5 L20.5 10.5 M25.5 17.5 L40.5 10.5 M25.5 37.5 L40.5 30.5"/><path shape-rendering="auto" d="M4.5 37.5 L20.5 30.5" stroke-dasharray="1 1.5"/></g></g><g transform="translate(741 764)"><rect x="0" y="0" width="46" height="48" fill="#A0A0A0"/><rect x="1" y="1" width="44" height="46" fill="#191970"/><text x="23" y="8.8" font-size="6.6" font-weight="bold" text-anchor="middle" fill="#FFFF00">CROSS</text><text x="23" y="44.3" font-size="6.8" font-weight="bold" text-anchor="middle" fill="#FFFF00">SECTION</text><rect x="13.5" y="12.5" width="21" height="21" fill="url(#cky)"/><g fill="none" stroke="#FFFF00" stroke-width="1"><rect x="4.5" y="17.5" width="21" height="20"/><path d="M20.5 10.5 H40.5 V30.5"/><path shape-rendering="auto" d="M4.5 17.5 L20.5 10.5 M25.5 17.5 L40.5 10.5 M25.5 37.5 L40.5 30.5"/><path shape-rendering="auto" d="M4.5 37.5 L20.5 30.5" stroke-dasharray="1 1.5"/></g></g></svg>
<div class="t  k" style="left:11.5px;top:3.76px;font-size:18px;color:#FFFF00;letter-spacing:-0.005px;">5<span class="hy" style="width:0.59em;transform:scaleX(2)">-</span>sep<span class="hy" style="width:0.59em;transform:scaleX(2)">-</span>1997,19:21:00</div>
<div class="t  k" style="left:198.6px;top:3.76px;font-size:18px;color:#fff;letter-spacing:0.056px;">Planar cross<span class="hy" style="width:0.7em;transform:scaleX(2)">-</span>section plot.</div>
<div class="t  k" style="left:422px;top:3.76px;font-size:18px;color:#fff;letter-spacing:0.486px;">Contour of</div>
<div class="t  k" style="left:11.5px;top:30.76px;font-size:18px;color:#fff;letter-spacing:0.117px;">radialvelocity using: rhb_hires.</div>
<div class="t " style="right:514px;top:300.53px;font-size:10px;color:#fff;letter-spacing:.3px;">0.0</div>
<div class="t " style="right:514px;top:255.41px;font-size:10px;color:#fff;letter-spacing:.3px;">0.4</div>
<div class="t " style="right:514px;top:210.29px;font-size:10px;color:#fff;letter-spacing:.3px;">0.8</div>
<div class="t " style="right:514px;top:165.17px;font-size:10px;color:#fff;letter-spacing:.3px;">1.2</div>
<div class="t " style="right:514px;top:120.05px;font-size:10px;color:#fff;letter-spacing:.3px;">1.6</div>
<div class="t " style="right:514px;top:74.94px;font-size:10px;color:#fff;letter-spacing:.3px;">2.0</div>
<div class="t " style="right:514px;top:29.82px;font-size:10px;color:#fff;letter-spacing:.3px;">2.4</div>
<div class="t " style="left:51px;transform:translateX(-50%);top:311.53px;font-size:10px;color:#fff;letter-spacing:.3px;">0.0</div>
<div class="t " style="left:157.5px;transform:translateX(-50%);top:311.53px;font-size:10px;color:#fff;letter-spacing:.3px;">1.5</div>
<div class="t " style="left:264px;transform:translateX(-50%);top:311.53px;font-size:10px;color:#fff;letter-spacing:.3px;">3.0</div>
<div class="t " style="left:370.5px;transform:translateX(-50%);top:311.53px;font-size:10px;color:#fff;letter-spacing:.3px;">4.4</div>
<div class="t " style="left:469px;top:311.11px;font-size:10.5px;color:#fff;">5.</div>
<div class="t " style="left:231.5px;top:320.53px;font-size:10px;color:#fff;letter-spacing:0.095px;">Distance in km</div>
<div class="t m" style="left:22.2px;top:215px;font-size:13px;color:#fff;transform:rotate(-90deg);transform-origin:0 0;">km above MSL</div>
<div class="t " style="left:479.5px;top:30.50px;font-size:13px;color:#fff;letter-spacing:-0.048px;">radialvelocity</div>
<div class="t " style="left:495px;top:50.34px;font-size:12px;color:#fff;letter-spacing:.1px;">12.0</div>
<div class="t " style="left:495px;top:61.34px;font-size:12px;color:#fff;letter-spacing:.1px;">11.0</div>
<div class="t " style="left:495px;top:72.34px;font-size:12px;color:#fff;letter-spacing:.1px;">10.0</div>
<div class="t " style="left:495px;top:83.34px;font-size:12px;color:#fff;letter-spacing:.1px;">9.0</div>
<div class="t " style="left:495px;top:94.34px;font-size:12px;color:#fff;letter-spacing:.1px;">8.0</div>
<div class="t " style="left:495px;top:105.34px;font-size:12px;color:#fff;letter-spacing:.1px;">7.0</div>
<div class="t " style="left:495px;top:116.34px;font-size:12px;color:#fff;letter-spacing:.1px;">6.0</div>
<div class="t " style="left:495px;top:127.34px;font-size:12px;color:#fff;letter-spacing:.1px;">5.0</div>
<div class="t " style="left:495px;top:138.34px;font-size:12px;color:#fff;letter-spacing:.1px;">4.0</div>
<div class="t " style="left:495px;top:149.34px;font-size:12px;color:#fff;letter-spacing:.1px;">3.0</div>
<div class="t " style="left:495px;top:160.34px;font-size:12px;color:#fff;letter-spacing:.1px;">2.0</div>
<div class="t " style="left:495px;top:171.34px;font-size:12px;color:#fff;letter-spacing:.1px;">1.0</div>
<div class="t " style="left:495px;top:182.34px;font-size:12px;color:#fff;letter-spacing:.1px;">0.0</div>
<div class="t " style="left:495px;top:193.34px;font-size:12px;color:#fff;letter-spacing:.1px;"><span class="hy" style="width:0.5em;transform:scaleX(1.5)">-</span>1.0</div>
<div class="t " style="left:495px;top:204.34px;font-size:12px;color:#fff;letter-spacing:.1px;"><span class="hy" style="width:0.5em;transform:scaleX(1.5)">-</span>2.0</div>
<div class="t " style="left:495px;top:215.34px;font-size:12px;color:#fff;letter-spacing:.1px;"><span class="hy" style="width:0.5em;transform:scaleX(1.5)">-</span>3.0</div>
<div class="t " style="left:495px;top:226.34px;font-size:12px;color:#fff;letter-spacing:.1px;"><span class="hy" style="width:0.5em;transform:scaleX(1.5)">-</span>4.0</div>
<div class="t " style="left:495px;top:237.34px;font-size:12px;color:#fff;letter-spacing:.1px;"><span class="hy" style="width:0.5em;transform:scaleX(1.5)">-</span>5.0</div>
<div class="t " style="left:495px;top:248.34px;font-size:12px;color:#fff;letter-spacing:.1px;"><span class="hy" style="width:0.5em;transform:scaleX(1.5)">-</span>6.0</div>
<div class="t " style="left:495px;top:259.34px;font-size:12px;color:#fff;letter-spacing:.1px;"><span class="hy" style="width:0.5em;transform:scaleX(1.5)">-</span>7.0</div>
<div class="t " style="left:495px;top:270.34px;font-size:12px;color:#fff;letter-spacing:.1px;"><span class="hy" style="width:0.5em;transform:scaleX(1.5)">-</span>8.0</div>
<div class="t " style="left:495px;top:281.34px;font-size:12px;color:#fff;letter-spacing:.1px;"><span class="hy" style="width:0.5em;transform:scaleX(1.5)">-</span>9.0</div>
<div class="t " style="left:495px;top:292.34px;font-size:12px;color:#fff;letter-spacing:.1px;"><span class="hy" style="width:0.5em;transform:scaleX(1.5)">-</span>10.0</div>
<div class="t " style="left:495px;top:303.34px;font-size:12px;color:#fff;letter-spacing:.1px;"><span class="hy" style="width:0.5em;transform:scaleX(1.5)">-</span>11.0</div>
<div class="t " style="left:495px;top:314.34px;font-size:12px;color:#fff;letter-spacing:.1px;"><span class="hy" style="width:0.5em;transform:scaleX(1.5)">-</span>12.0</div>
</div>
<div class="dot" style="left:1158px;top:515px;width:102px;height:526px;overflow:hidden;">
<div style="left:1px;top:1px;width:100px;height:524px;background:#5F9EA0;"></div>
<svg width="102" height="526" viewBox="1158 515 102 526" shape-rendering="crispEdges"><rect x="1163" y="520" width="92" height="520" fill="#000"/><rect x="1165" y="522" width="88" height="520" fill="#5F9EA0"/><rect x="1169" y="526" width="52" height="48" fill="#000"/><rect x="1171" y="528" width="48" height="44" fill="#191970"/><g transform="translate(1171 528)"><g transform="translate(1 -2)"><path shape-rendering="auto" d="M6.9 12.6 C10 8.2 17 6.6 22.5 9.6 S32 13.2 37.6 9.4 C36 15 27.5 17.5 22.5 21 C17 25 12 33 6.4 39.6 C12 36 20 35.6 26 39.6 S36 40.6 38.8 35.4" fill="none" stroke="#FFFF00" stroke-width="1.8" stroke-linejoin="miter"/></g></g><rect x="1169" y="578" width="52" height="48" fill="#000"/><rect x="1171" y="580" width="48" height="44" fill="#191970"/><g transform="translate(1171 580)"><rect x="7" y="22" width="34" height="9" fill="url(#cky)"/><path d="M7 22 L12 13 h24 l5 9z" fill="#FFFF00"/><path d="M14.5 19 L17 14 h14 l2.5 5z" fill="#191970"/><path d="M17 17 V8 l2 -3 h7 l5 6 v6z" fill="url(#cky)"/><path d="M26 5 l5 6 h-5z" fill="#FFFF00"/><path d="M33 25.5 h5 l1.5 1.5 l-1.5 1.5 h-5z" fill="#191970"/></g><rect x="1169" y="630" width="52" height="48" fill="#000"/><rect x="1171" y="632" width="48" height="44" fill="#191970"/><g transform="translate(1171 632)"><path d="M4 42 V15 h5 A22 27 0 0 1 25.5 42 Z" fill="url(#cky)"/><path d="M4 15 h6 l-3 5 h-3z M15 23 l4 -3 l5 8 l1 8 l-6 -3 l-5 -5z M4 37 l5 -2 l5 2 v5 h-10z M4 27 l3 3 l-3 2z" fill="#FFFF00"/><path d="M36 2.5 l2.8 2.8 l-2.8 2.8 l-2.8 -2.8z" fill="#FFFF00"/><path d="M22.4 22.4 L34.1 8.3 M24.7 25.9 L35.3 9.5" stroke="#FFFF00" stroke-width="1.2" stroke-dasharray="1 1.3"/><rect x="7" y="5" width="1" height="1" fill="#FFFF00"/><rect x="22" y="4" width="1" height="1" fill="#FFFF00"/><rect x="16" y="9" width="1" height="1" fill="#FFFF00"/><rect x="23" y="8" width="1" height="1" fill="#FFFF00"/><rect x="41" y="2" width="1" height="1" fill="#FFFF00"/><rect x="42" y="11" width="1" height="1" fill="#FFFF00"/><rect x="17" y="15" width="1" height="1" fill="#FFFF00"/><rect x="32" y="18" width="1" height="1" fill="#FFFF00"/><rect x="30" y="26" width="1" height="1" fill="#FFFF00"/><rect x="35" y="30" width="1" height="1" fill="#FFFF00"/><rect x="40" y="28" width="1" height="1" fill="#FFFF00"/><rect x="31" y="34" width="1" height="1" fill="#FFFF00"/><rect x="26" y="40" width="1" height="1" fill="#FFFF00"/><rect x="40" y="39" width="1" height="1" fill="#FFFF00"/></g><rect x="1169" y="682" width="52" height="48" fill="#000"/><rect x="1171" y="684" width="48" height="44" fill="#191970"/><g transform="translate(1171 684)"><g shape-rendering="auto" fill="none" stroke="#FFFF00" stroke-width="1"><circle cx="23.6" cy="17.2" r="15.6"/><circle cx="23.6" cy="17.2" r="10.4"/><circle cx="23.6" cy="17.2" r="4.7"/><path d="M28.3 17.2 L39.2 17.2"/><path d="M26.9 20.5 L34.6 28.2"/><path d="M23.6 21.9 L23.6 32.8"/><path d="M20.3 20.5 L12.6 28.2"/><path d="M18.9 17.2 L8.0 17.2"/><path d="M20.3 13.9 L12.6 6.2"/><path d="M23.6 12.5 L23.6 1.6"/><path d="M26.9 13.9 L34.6 6.2"/></g></g><rect x="1169" y="734" width="52" height="48" fill="#000"/><rect x="1171" y="736" width="48" height="44" fill="#191970"/><g transform="translate(1171 736)"><g transform="translate(8.5 -2)"><path shape-rendering="auto" d="M5.2 9.5 Q9 27 27.5 31" fill="none" stroke="#FFFF00" stroke-width="2" stroke-linecap="round"/><path d="M12.5 21 h3 l.8 14 h-7z M9 35 h7.5 v5 h-7.5z" fill="#FFFF00"/><rect x="12.5" y="20.5" width="4" height="4" fill="none" stroke="#FFFF00"/></g></g><rect x="1169" y="786" width="52" height="48" fill="#000"/><rect x="1171" y="788" width="48" height="44" fill="#191970"/><g transform="translate(1171 788)"><g transform="translate(1 -2)"><path shape-rendering="auto" d="M5.7 32.5 H40 L37 38.5 M5.7 32.5 Q5.5 36.5 9.5 38.5 M8.5 32.5 V24.5 H12.2 L15.5 32.5 M21.5 32.5 V27 M23.5 32.5 V27 M34.5 32.5 V16" fill="none" stroke="#FFFF00" stroke-width="1"/><circle shape-rendering="auto" cx="22.5" cy="23.5" r="3.2" fill="none" stroke="#FFFF00"/><path shape-rendering="auto" d="M3 44 V37.3 q2.85 6.4 5.7 0 q2.85 6.4 5.7 0 q2.85 6.4 5.7 0 q2.85 6.4 5.7 0 q2.85 6.4 5.7 0 q2.85 6.4 5.7 0 q2.85 6.4 5.7 0 V44z" fill="#FFFF00"/></g></g></svg>
<div class="t  b" style="left:25px;top:96.23px;font-size:8px;color:#FFFF00;"><span class="nw" style="transform:scaleX(1.0000)">PRINT</span></div>
<div class="t " style="left:17.8px;top:201.98px;font-size:9px;color:#FFFF00;"><span class="nw" style="transform:scaleX(0.7833)">OVERLAYS</span></div>
</div>
<div class="dot" style="left:1158px;top:495px;width:102px;height:21px;overflow:hidden;">
<div style="left:1px;top:1px;width:100px;height:19px;background:#006400;"></div>
<div class="t  b" style="left:45px;top:3.84px;font-size:12px;color:#E4E0E4;"><span class="nw" style="transform:scaleX(0.9900)">icons</span></div>
<svg width="102" height="21" viewBox="1158 495 102 21" shape-rendering="crispEdges"><rect x="1161.5" y="498.5" width="14" height="14" fill="#006400" stroke="#E4E0E4"/><circle cx="1168.5" cy="505.5" r="4.6" fill="#E4E0E4" shape-rendering="auto"/><rect x="1180.5" y="498.5" width="14" height="14" fill="#006400" stroke="#E4E0E4"/><path d="M1183.5 500.5 h7 v9 h-7 z" fill="none" stroke="#E4E0E4"/><path d="M1190.5 501.5 h2 v10 h-7 v-2" fill="none" stroke="#E4E0E4" stroke-width="1"/><rect x="1185" y="510" width="6" height="2" fill="#E4E0E4"/><rect x="1191" y="502" width="2" height="9" fill="#E4E0E4"/><rect x="1186" y="503" width="3" height="1" fill="#E4E0E4"/><rect x="1186" y="505" width="3" height="1" fill="#E4E0E4"/><rect x="1186" y="507" width="3" height="1" fill="#E4E0E4"/><rect x="1242.5" y="498.5" width="14" height="14" fill="#006400" stroke="#E4E0E4"/><path d="M1247.5 498.5 v4 h-5 M1251.5 498.5 v9 h-9" fill="none" stroke="#E4E0E4"/><rect x="1223.5" y="498.5" width="14" height="14" fill="#006400" stroke="#E4E0E4"/><circle cx="1230.5" cy="505.5" r="2" fill="none" stroke="#E4E0E4" stroke-width="1.3" shape-rendering="auto"/></svg>
</div>
<div class="dot" style="left:595px;top:838px;width:659px;height:117px;overflow:hidden;">
<div style="left:1px;top:1px;width:657px;height:115px;background:#000;"></div>
<svg width="659" height="117" viewBox="595 838 659 117" shape-rendering="crispEdges"><rect x="602" y="870" width="644" height="76" fill="none" stroke="#fff" stroke-width="2"/><rect x="707" y="845" width="29" height="22" fill="none" stroke="#fff" stroke-width="2"/><rect x="743" y="845" width="44" height="22" fill="none" stroke="#fff" stroke-width="2"/></svg>
<div class="t b" style="left:10px;top:10.84px;font-size:12px;color:#fff;"><span class="nw" style="transform:scaleX(.84)">Data times for big2</span></div>
<div class="t " style="left:126px;transform:translateX(-50%);top:11.84px;font-size:12px;color:#fff;"><span class="nw" style="transform:scaleX(.78);transform-origin:50% 50%">Help</span></div>
<div class="t " style="left:170px;transform:translateX(-50%);top:11.84px;font-size:12px;color:#fff;"><span class="nw" style="transform:scaleX(.78);transform-origin:50% 50%">Dismiss</span></div>
<div class="t m" style="left:10px;top:37.01px;font-size:15px;color:#fff;">COMPONENT      PLATFORM   FIELD      ALTITUDE       TIME</div>
<div class="t m" style="left:10px;top:51.81px;font-size:15px;color:#fff;">c_radar        rhb_hires  maxdz      1.00 km MSL    5-Sep-97,19:20:21</div>
</div>
<div class="dot" style="left:595px;top:818px;width:175px;height:21px;overflow:hidden;">
<div style="left:1px;top:1px;width:173px;height:19px;background:#006400;"></div>
<div class="t  b" style="left:45px;top:3.84px;font-size:12px;color:#E4E0E4;"><span class="nw" style="transform:scaleX(1.0417)">overlay</span></div>
<svg width="175" height="21" viewBox="595 818 175 21" shape-rendering="crispEdges"><rect x="598.5" y="821.5" width="14" height="14" fill="#006400" stroke="#E4E0E4"/><circle cx="605.5" cy="828.5" r="4.6" fill="#E4E0E4" shape-rendering="auto"/><rect x="617.5" y="821.5" width="14" height="14" fill="#006400" stroke="#E4E0E4"/><path d="M620.5 823.5 h7 v9 h-7 z" fill="none" stroke="#E4E0E4"/><path d="M627.5 824.5 h2 v10 h-7 v-2" fill="none" stroke="#E4E0E4" stroke-width="1"/><rect x="622" y="833" width="6" height="2" fill="#E4E0E4"/><rect x="628" y="825" width="2" height="9" fill="#E4E0E4"/><rect x="623" y="826" width="3" height="1" fill="#E4E0E4"/><rect x="623" y="828" width="3" height="1" fill="#E4E0E4"/><rect x="623" y="830" width="3" height="1" fill="#E4E0E4"/><rect x="752.5" y="821.5" width="14" height="14" fill="#006400" stroke="#E4E0E4"/><path d="M757.5 821.5 v4 h-5 M761.5 821.5 v9 h-9" fill="none" stroke="#E4E0E4"/><rect x="733.5" y="821.5" width="14" height="14" fill="#006400" stroke="#E4E0E4"/><circle cx="740.5" cy="828.5" r="2" fill="none" stroke="#E4E0E4" stroke-width="1.3" shape-rendering="auto"/></svg>
</div>
</body></html>
